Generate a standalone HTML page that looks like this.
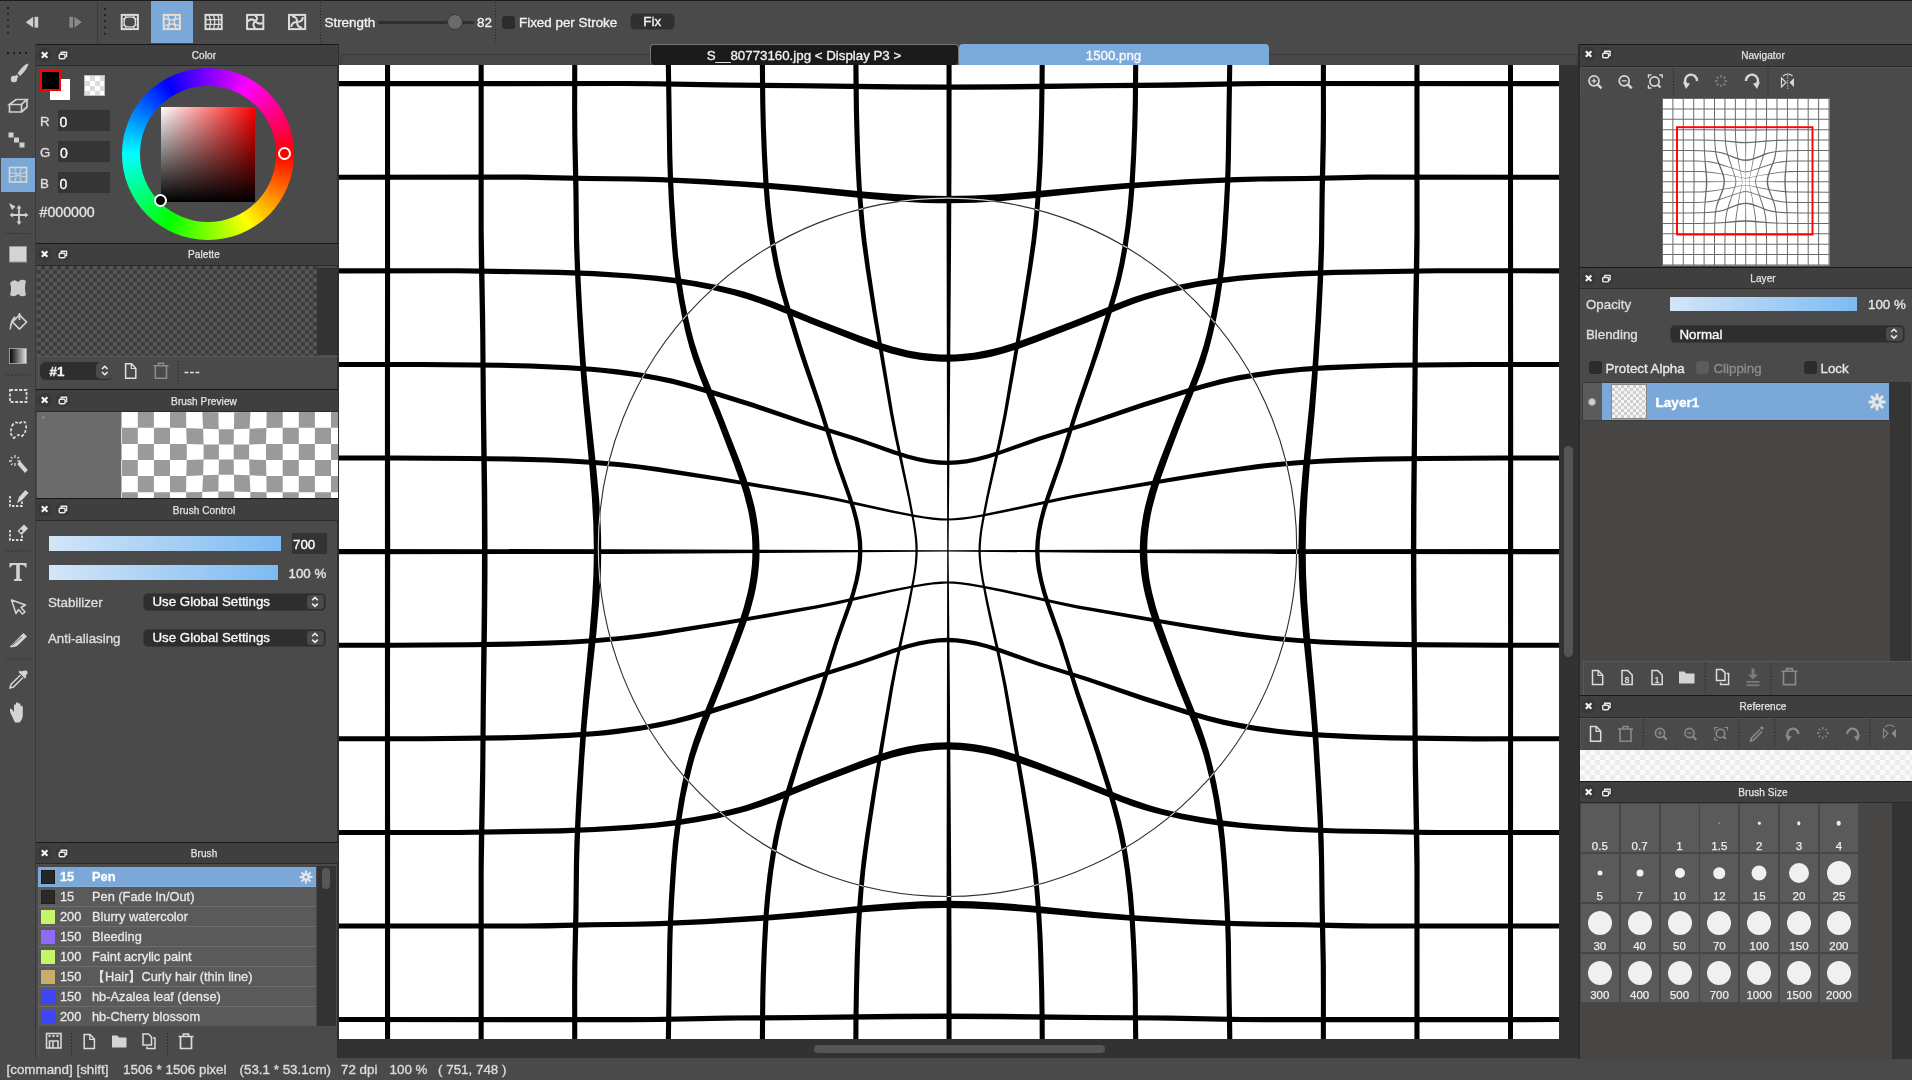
<!DOCTYPE html>
<html><head><meta charset="utf-8">
<style>
*{box-sizing:border-box;margin:0;padding:0}
html,body{width:1912px;height:1080px;overflow:hidden;background:#4a4a4a;font-family:"Liberation Sans",sans-serif;color:#e8e8e8}
.a{position:absolute}
.hd{position:absolute;height:22px;background:#3f3f3f;border-top:1px solid #181818;border-bottom:1px solid #2a2a2a}
.hd .t{position:absolute;left:0;right:0;top:4.5px;text-align:center;font-size:10px;color:#e4e4e4;letter-spacing:0.1px;-webkit-text-stroke:0.25px currentColor}
.hd svg{position:absolute;top:4px}
.txt{position:absolute;white-space:nowrap;font-size:13.3px;line-height:16px;color:#e8e8e8;-webkit-text-stroke:0.35px currentColor;transform:translateY(1px)}
.dots{position:absolute;width:2px;background-image:linear-gradient(#222 50%,transparent 50%);background-size:2px 4px}
.hdots{position:absolute;height:2px;background-image:linear-gradient(90deg,#222 50%,transparent 50%);background-size:4px 2px}
.ic{position:absolute}
.dd{position:absolute;background:#2e2e2e;border-radius:5px;border:1px solid #3a3a3a}
.dd .st{position:absolute;right:1px;top:1px;bottom:1px;width:17px;background:#4a4a4a;border-radius:4px}
.sl{position:absolute;height:14px;background:linear-gradient(90deg,#d3e6f8,#7cbaf2)}
.row{position:absolute;left:38px;width:278px;height:20px;background:#5a5a5a;border-bottom:1px solid #6c6c6c;font-size:12.8px;line-height:20px;-webkit-text-stroke:0.3px currentColor}
.row .sw{position:absolute;left:3px;top:3px;width:14px;height:14px}
.row .n{position:absolute;left:22px;top:0}
.row .m{position:absolute;left:54px;top:0;white-space:nowrap}
.bs{position:absolute;width:38px;height:48px;background:#5a5a5a}
.bs .c{position:absolute;left:50%;top:19px;border-radius:50%;background:#f0f0f0;transform:translate(-50%,-50%)}
.bs .l{position:absolute;left:0;right:0;top:35.5px;text-align:center;font-size:11.5px;color:#eee;-webkit-text-stroke:0.25px currentColor}
</style></head><body>
<!-- ===== TOP TOOLBAR ===== -->
<div class="a" style="left:0;top:0;width:1912px;height:1px;background:#1d1d1d"></div>
<div class="dots" style="left:7px;top:7px;height:28px;background-size:2px 6.2px;background-image:linear-gradient(#1f1f1f 35%,transparent 35%)"></div>
<svg class="a" style="left:20px;top:12px" width="70" height="20" viewBox="20 12 70 20">
<path d="M33.2 16.8 L25.8 22.2 L33.2 27.6Z" fill="#cfcfcf"/><rect x="34.6" y="16.8" width="3.6" height="10.8" fill="#cfcfcf"/>
<rect x="69.4" y="16.8" width="3.6" height="10.8" fill="#8a8a8a"/><path d="M74.4 16.8 L81.8 22.2 L74.4 27.6Z" fill="#8a8a8a"/>
</svg>
<div class="a" style="left:97px;top:1px;width:1px;height:43px;background:#3c3c3c"></div>
<div class="dots" style="left:104px;top:8px;height:28px;background-size:2px 6.2px;background-image:linear-gradient(#1f1f1f 35%,transparent 35%)"></div>
<div class="a" style="left:151px;top:1px;width:42px;height:42px;background:#7aa9d9"></div>
<svg class="a" style="left:110px;top:8px" width="205" height="28" viewBox="110 8 205 28">
<g fill="none" stroke="#dcdcdc">
<rect x="121.7" y="14.9" width="16.2" height="14.2" stroke-width="2"/>
<g stroke-width="1.3"><path d="M123 19.2 Q129.8 14.6 136.6 19.2M123 24.8 Q129.8 29.4 136.6 24.8M126.2 16 Q121.8 22 126.2 28M133.4 16 Q137.8 22 133.4 28"/></g>
</g>
<g fill="none" stroke="#e8ddd0">
<rect x="163.7" y="14.9" width="16.2" height="14.2" stroke-width="2"/>
<g stroke-width="1.5"><path d="M164.5 18.2 Q171.8 21.8 179.1 18.2M164.5 25.8 Q171.8 22.2 179.1 25.8M167.6 15.5 Q171 22 167.6 28.5M176 15.5 Q172.6 22 176 28.5"/></g>
</g>
<g fill="none" stroke="#dcdcdc">
<rect x="205.5" y="14.9" width="16.2" height="14.2" stroke-width="2"/>
<g stroke-width="1.3"><path d="M206 19.6h15.2M206 24.4h15.2M209.2 15.5l1 4M213.6 15.5l1 4M218 15.5l1 4M210.4 19.6v4.8M214.6 19.6v4.8M218.8 19.6v4.8M210.4 24.4l-1 4.2M214.6 24.4l-1 4.2M218.8 24.4l-1 4.2"/></g>
</g>
<g fill="none" stroke="#dcdcdc">
<rect x="247.1" y="14.9" width="16.2" height="14.2" stroke-width="2"/>
<g stroke-width="2.1"><path d="M248 21.2 Q251.5 17.5 255.2 21.2 Q258.9 24.9 262.4 22.8M255.2 15.6 Q258.9 18.2 255.2 21.2 Q251.5 24.2 255.2 28.4"/></g>
</g>
<g fill="none" stroke="#dcdcdc">
<rect x="289" y="14.9" width="16.2" height="14.2" stroke-width="2"/>
<g stroke-width="2.1"><path d="M297.1 22 Q297.1 16.5 292 16.2M297.1 22 Q302.6 22 302.9 17M297.1 22 Q297.1 27.5 302.2 27.8M297.1 22 Q291.6 22 291.3 27"/></g>
</g>
</svg>
<div class="dots" style="left:320px;top:2px;height:40px;width:1px;background-size:1px 3px;background-image:linear-gradient(#2a2a2a 50%,transparent 50%)"></div>
<div class="txt" style="left:324.5px;top:14px;font-size:13.4px;color:#f2f2f2">Strength</div>
<div class="a" style="left:378px;top:20.5px;width:96px;height:3px;background:#2f2f2f;border-radius:1.5px"></div>
<div class="a" style="left:446.5px;top:14px;width:16px;height:16px;border-radius:50%;background:#6a6a6a;border:1px solid #3a3a3a"></div>
<div class="txt" style="left:477px;top:14px;font-size:13.4px;color:#f2f2f2">82</div>
<div class="dots" style="left:495px;top:2px;height:40px;width:1px;background-size:1px 3px;background-image:linear-gradient(#2a2a2a 50%,transparent 50%)"></div>
<div class="a" style="left:502px;top:16px;width:13px;height:13px;border-radius:3px;background:#2c2c2c"></div>
<div class="txt" style="left:519px;top:14px;font-size:13.4px;color:#f2f2f2">Fixed per Stroke</div>
<div class="a" style="left:629.5px;top:12.5px;width:45.5px;height:17px;border-radius:5px;background:#2f2f2f;border:1px solid #3d3d3d"></div>
<div class="txt" style="left:629.5px;top:13px;width:45.5px;text-align:center;font-size:13.4px;color:#f2f2f2">Fix</div>

<!-- ===== LEFT TOOL COLUMN ===== -->
<div class="a" style="left:35px;top:44px;width:1px;height:1014px;background:#3a3a3a"></div>
<div class="a" style="left:1px;top:158px;width:34px;height:34px;background:#7aa9d9"></div>
<svg class="a" style="left:0;top:44px" width="36" height="700" viewBox="0 44 36 700">
<g fill="#1e1e1e">
<rect x="7" y="52" width="2" height="2"/><rect x="13" y="52" width="2" height="2"/><rect x="19" y="52" width="2" height="2"/><rect x="25" y="52" width="2" height="2"/>
</g>
<g fill="none" stroke="#262626" stroke-width="1.2" stroke-dasharray="1.2 2.2">
<path d="M5 233.5h26M5 375h26M5 551h26M5 659h26"/>
</g>
<!-- brush -->
<path d="M27.6 63.5 Q22 66 17.5 73.5 L20 76 Q26 71 28.4 64.5Z" fill="#cfcfcf"/>
<circle cx="14" cy="79" r="3.2" fill="#cfcfcf"/><path d="M11 80.5 L16.5 74.5 L18.5 77 L13 82.5Z" fill="#cfcfcf"/>
<!-- eraser -->
<g fill="none" stroke="#d0d0d0" stroke-width="1.7"><path d="M9.5 104.5 L16 99.5 H27 L21.5 104.5Z"/><path d="M9.5 104.5 V112 H21.5 V104.5 M21.5 112 L27 107 V99.5"/></g>
<!-- dots line -->
<g fill="#d0d0d0"><rect x="8.5" y="132.5" width="5" height="5"/><rect x="14" y="137.5" width="5" height="5"/><rect x="19.5" y="142.5" width="5" height="5"/></g>
<!-- mesh (selected) -->
<g fill="none" stroke="#ddd6cc" stroke-width="1.6"><rect x="9.5" y="167.5" width="17" height="14.5"/>
<path d="M9.5 172.5 Q18 175.5 26.5 172.5 M9.5 177 Q18 174 26.5 177 M14.5 167.5 Q18 175 14.5 182 M21.5 167.5 Q18 175 21.5 182" stroke-width="1"/></g>
<!-- move -->
<g fill="#d0d0d0"><path d="M9 203 L15.5 206.5 L12 210Z"/><path d="M19 207 V223 M11.5 215 H26.5" stroke="#d0d0d0" stroke-width="1.8"/>
<path d="M19 205 L16.5 208.5 H21.5Z M19 225 L16.5 221.5 H21.5Z M9.5 215 L13 212.5 V217.5Z M28.5 215 L25 212.5 V217.5Z"/></g>
<!-- fill rect -->
<rect x="9.5" y="246.5" width="17" height="15.5" fill="#d4d4d4" stroke="#9a9a9a" stroke-width="1"/>
<!-- blur -->
<path d="M10 283 Q14 278 18 282 Q22 278 26 281 Q24 288 26 295 Q22 298 18 294 Q14 298 10 295 Q12 288 10 283Z" fill="#cdcdcd"/>
<!-- bucket -->
<g fill="none" stroke="#d0d0d0" stroke-width="1.7"><path d="M12.5 322 L19.5 315 L26.5 322 L19.5 329Z"/><path d="M19.5 313 V320"/></g>
<path d="M15 316 Q10 319 9.5 330 L11 329 Q12 322 15.5 318Z" fill="#d0d0d0"/>
<!-- gradient -->
<defs><linearGradient id="gr1" x1="0" x2="1"><stop offset="0" stop-color="#000"/><stop offset="1" stop-color="#e6e6e6"/></linearGradient></defs>
<rect x="9.5" y="348.5" width="17" height="15" fill="url(#gr1)" stroke="#a0a0a0" stroke-width="1"/>
<!-- select rect -->
<rect x="10" y="390" width="16.5" height="12" fill="none" stroke="#dadada" stroke-width="1.8" stroke-dasharray="3 1.6"/>
<!-- lasso -->
<path d="M12 426 Q15 420 19 424 Q24 419 26 424 Q27 432 22 436 Q19 433 14 438 Q9 435 12 426Z" fill="none" stroke="#dadada" stroke-width="1.8" stroke-dasharray="3 1.8"/>
<!-- wand -->
<g stroke="#d6d6d6" stroke-width="1.3"><path d="M15 455v3M15 463v3M9 461h3M17.5 461h3M11 457l1.5 1.5M11 465l1.5-1.5M19 457l-1.5 1.5"/></g>
<path d="M18 464 L20 462 L27 470 L25 472Z" fill="#d6d6d6" stroke="#d6d6d6" stroke-width="1.2"/>
<!-- select pen -->
<path d="M10 496 V506 H22 V500" fill="none" stroke="#dadada" stroke-width="1.8" stroke-dasharray="2.4 1.6"/>
<path d="M17 503 L19 497 L25.5 490 L28.5 493 L22 500Z" fill="#d6d6d6"/>
<!-- select eraser -->
<path d="M10 530 V540 H22 V534" fill="none" stroke="#dadada" stroke-width="1.8" stroke-dasharray="2.4 1.6"/>
<path d="M17.5 531 L24 524.5 L28 528.5 L21.5 535Z" fill="#d6d6d6"/><circle cx="21" cy="531" r="1.4" fill="#4a4a4a"/>
<!-- T -->
<path d="M9.5 563 H26.5 V567.5 H25.5 Q25 565 22.5 565 H19.8 V578.5 L22 579.5 V581 H14 V579.5 L16.2 578.5 V565 H13.5 Q11 565 10.5 567.5 H9.5Z" fill="#d4d4d4"/>
<!-- arrow -->
<path d="M11.5 600 L25.5 605 L21 607.5 L25 612 L22.5 614 L18.5 609.5 L16 613.5Z" fill="none" stroke="#d4d4d4" stroke-width="1.5" stroke-linejoin="round"/>
<!-- knife -->
<path d="M9.5 647 L23.5 633 L27 636.5 L17 646 Q13 648 9.5 647Z" fill="#d4d4d4"/><path d="M12 645.5 L22 637" stroke="#4a4a4a" stroke-width="0.8"/>
<!-- eyedropper -->
<path d="M24.5 670.5 Q28 670 27.5 673.5 L25.5 676 L26.5 677 L25 678.5 L18.5 672 L20 670.5 L21 671.5Z" fill="#d4d4d4"/>
<path d="M20.5 675 L11 684.5 L10 688 L13.5 687 L23 677.5" fill="none" stroke="#d4d4d4" stroke-width="1.5"/>
<!-- hand -->
<path d="M12.5 717 Q9.5 712 10 709 Q11 708 12.5 710 L14 712 V705 Q15 703.5 16 705 V711 V703 Q17 701.5 18.3 703 V711 V704 Q19.3 702.5 20.5 704 V711.5 V706.5 Q21.5 705 22.8 706.5 V715 Q22.5 720 19.5 722.5 H15 Q13.5 720 12.5 717Z" fill="#d4d4d4"/>
</svg>

<!-- ===== LEFT PANELS ===== -->
<div class="a" style="left:337px;top:44px;width:2px;height:1014px;background:#2e2e2e"></div>
<!-- Color header -->
<div class="hd" style="left:36px;top:43.5px;width:302px;height:22.5px"><div class="t" style="left:34px;top:5px">Color</div>
<svg style="left:0;top:0" width="40" height="21" viewBox="36 44 40 21"><circle cx="44.6" cy="54" r="7" fill="#383838"/><circle cx="63" cy="54" r="7" fill="#383838"/><path d="M41.8 51.2l5.6 5.6M47.4 51.2l-5.6 5.6" stroke="#f4f4f4" stroke-width="2.1"/><g fill="none" stroke="#e8e8e8" stroke-width="1.4"><rect x="59.2" y="53.3" width="5.8" height="4.4" rx="1"/><path d="M61.2 53.3v-2.1h5.4v4.4h-1.6"/></g></svg></div>
<!-- color body -->
<div class="a" style="left:49.5px;top:79px;width:20px;height:20.5px;background:#fff"></div>
<div class="a" style="left:40px;top:70px;width:21px;height:21px;background:#000;border:2px solid #f00"></div>
<div class="a" style="left:84px;top:74.5px;width:21px;height:21px;background-color:#fff;background-image:linear-gradient(45deg,#dcdcdc 25%,transparent 25%,transparent 75%,#dcdcdc 75%),linear-gradient(45deg,#dcdcdc 25%,transparent 25%,transparent 75%,#dcdcdc 75%);background-size:10px 10px;background-position:0 0,5px 5px;border:1px solid #bbb"></div>
<div class="txt" style="left:40px;top:113px;font-size:13.3px;color:#dedede">R</div>
<div class="txt" style="left:40px;top:144px;font-size:13.3px;color:#dedede">G</div>
<div class="txt" style="left:40px;top:175px;font-size:13.3px;color:#dedede">B</div>
<div class="a" style="left:57.5px;top:110px;width:52px;height:21px;background:#353535"></div>
<div class="a" style="left:58px;top:141px;width:52px;height:21px;background:#353535"></div>
<div class="a" style="left:57.5px;top:172px;width:52px;height:21px;background:#353535"></div>
<div class="txt" style="left:59.5px;top:113px;font-size:14px;color:#fff">0</div>
<div class="txt" style="left:60px;top:144px;font-size:14px;color:#fff">0</div>
<div class="txt" style="left:59.5px;top:175px;font-size:14px;color:#fff">0</div>
<div class="txt" style="left:39.5px;top:203px;font-size:14.2px;color:#e4e4e4">#000000</div>
<div class="a" style="left:122px;top:68px;width:171.5px;height:171.5px;border-radius:50%;background:conic-gradient(from 90deg,#ff0000,#ffff00 16.67%,#00ff00 33.33%,#00ffff 50%,#0000ff 66.67%,#ff00ff 83.33%,#ff0000)"></div>
<div class="a" style="left:140px;top:86px;width:135.5px;height:135.5px;border-radius:50%;background:#4a4a4a"></div>
<div class="a" style="left:160.8px;top:106.7px;width:94.5px;height:95px;background:linear-gradient(to top,#000,rgba(0,0,0,0)),linear-gradient(to right,#fff,#f00)"></div>
<div class="a" style="left:277.7px;top:147.2px;width:13px;height:13px;border-radius:50%;background:#f00;border:2.2px solid #fff"></div>
<div class="a" style="left:154.3px;top:193.8px;width:13px;height:13px;border-radius:50%;background:#000;border:2.2px solid #fff"></div>
<!-- Palette header -->
<div class="hd" style="left:36px;top:242.5px;width:302px;height:23px"><div class="t" style="left:34px;top:5.5px">Palette</div>
<svg style="left:0;top:0" width="40" height="21" viewBox="36 243.5 40 21"><circle cx="44.6" cy="253.5" r="7" fill="#383838"/><circle cx="63" cy="253.5" r="7" fill="#383838"/><path d="M41.8 250.7l5.6 5.6M47.4 250.7l-5.6 5.6" stroke="#f4f4f4" stroke-width="2.1"/><g fill="none" stroke="#e8e8e8" stroke-width="1.4"><rect x="59.2" y="252.8" width="5.8" height="4.4" rx="1"/><path d="M61.2 252.8v-2.1h5.4v4.4h-1.6"/></g></svg></div>
<div class="a" style="left:37px;top:266px;width:279.5px;height:90px;background-color:#565656;background-image:linear-gradient(45deg,#3c3c3c 25%,transparent 25%,transparent 75%,#3c3c3c 75%),linear-gradient(45deg,#3c3c3c 25%,transparent 25%,transparent 75%,#3c3c3c 75%);background-size:8px 8px;background-position:0 0,4px 4px"></div>
<div class="a" style="left:316.5px;top:267.5px;width:20px;height:87.5px;background:#333"></div>
<div class="a" style="left:37.5px;top:356px;width:300px;height:33px;border-top:1px solid #585858;border-left:1px solid #585858"></div>
<div class="a" style="left:40px;top:361.5px;width:74px;height:18px;border-radius:6px;background:#2e2e2e"></div>
<div class="a" style="left:96px;top:362px;width:17.5px;height:17px;border-radius:5px;background:#4a4a4a"></div>
<svg class="a" style="left:96px;top:362px" width="18" height="17" viewBox="0 0 18 17"><path d="M6 7 L8.8 4.2 L11.6 7 M6 10 L8.8 12.8 L11.6 10" fill="none" stroke="#eee" stroke-width="1.5"/></svg>
<div class="txt" style="left:49.5px;top:362.5px;font-size:13.3px;font-weight:bold;color:#f4f4f4">#1</div>
<svg class="a" style="left:120px;top:360px" width="90" height="22" viewBox="120 360 90 22"><path d="M125.6 363.8 H131.5 L135.8 368.2 V378.3 H125.6Z" fill="none" stroke="#e0e0e0" stroke-width="1.5"/><path d="M131.3 363.8 V368.5 H135.8" fill="none" stroke="#e0e0e0" stroke-width="1.2"/>
<g fill="none" stroke="#8a8a8a" stroke-width="1.6"><path d="M153.5 365.8 H168.5 M155.3 366 V378.3 H166.5 V366 M158.5 365.8 V363.3 H163.5 V365.8"/></g>
<path d="M178 361v26" stroke="#262626" stroke-width="1" stroke-dasharray="1.2 2"/>
<path d="M184.5 372.5 h3.8 M190 372.5 h3.8 M195.5 372.5 h3.8" stroke="#e0e0e0" stroke-width="1.5"/></svg>
<!-- Brush Preview header -->
<div class="hd" style="left:36px;top:389px;width:302px;height:23px"><div class="t" style="left:34px;top:5.5px">Brush Preview</div>
<svg style="left:0;top:0" width="40" height="21" viewBox="36 390 40 21"><circle cx="44.6" cy="400" r="7" fill="#383838"/><circle cx="63" cy="400" r="7" fill="#383838"/><path d="M41.8 397.2l5.6 5.6M47.4 397.2l-5.6 5.6" stroke="#f4f4f4" stroke-width="2.1"/><g fill="none" stroke="#e8e8e8" stroke-width="1.4"><rect x="59.2" y="399.3" width="5.8" height="4.4" rx="1"/><path d="M61.2 399.3v-2.1h5.4v4.4h-1.6"/></g></svg></div>
<div class="a" style="left:37px;top:412px;width:84px;height:86px;background:#6b6b6b"></div>
<div class="a" style="left:41.5px;top:415.5px;width:3.5px;height:3.5px;border-radius:50%;background:#888"></div>
<svg class="a" style="left:121px;top:412px" width="217" height="86" viewBox="121 412 217 86"><rect x="121" y="412" width="217" height="86" fill="#fff"/><path d="M121.7,395.6 137.8,395.6 137.8,411.7 121.7,411.7 121.7,397.6ZM153.9,395.6 170.0,395.6 170.0,411.7 153.9,411.7 153.9,397.6ZM186.1,395.6 202.2,395.6 202.3,411.9 186.1,411.7 186.1,397.6ZM218.3,395.6 234.4,395.6 234.3,412.3 218.4,412.3 218.3,397.7ZM250.5,395.6 266.6,395.6 266.6,397.6 266.6,411.7 250.4,411.9 250.5,397.6ZM282.7,395.6 298.8,395.6 298.8,411.7 282.7,411.7 282.7,397.6ZM314.9,395.6 331.0,395.6 331.0,411.7 314.9,411.7 314.9,397.6ZM347.1,395.6 363.2,395.6 363.2,411.7 347.1,411.7 347.1,397.6ZM105.6,411.7 121.7,411.7 121.7,427.8 105.6,427.8 105.6,413.7ZM137.8,411.7 153.9,411.7 153.9,427.8 137.8,427.8 137.8,413.7ZM170.0,411.7 186.1,411.7 186.3,427.9 170.0,427.8 170.0,413.7ZM202.3,411.9 218.4,412.3 218.7,429.2 203.1,428.7 202.4,414.0ZM234.3,412.3 250.4,411.9 250.3,414.0 249.6,428.7 245.6,428.8 233.9,429.2 234.2,414.5ZM266.6,411.7 282.7,411.7 282.7,427.8 266.4,427.9 266.6,413.7ZM298.8,411.7 314.9,411.7 314.9,427.8 298.8,427.8 298.8,413.7ZM331.0,411.7 347.1,411.7 347.1,427.8 331.0,427.8 331.0,413.7ZM121.7,427.8 137.8,427.8 137.8,443.9 121.7,443.9 121.7,429.8ZM153.9,427.8 170.0,427.8 170.0,443.9 153.9,443.9 153.9,429.8ZM186.3,427.9 203.1,428.7 203.6,444.4 186.7,444.0 186.3,429.9ZM218.7,429.2 233.9,429.2 233.7,444.5 218.9,444.5 218.8,431.2ZM249.6,428.7 266.4,427.9 266.0,444.0 249.1,444.4 249.5,430.7ZM282.7,427.8 298.8,427.8 298.8,443.9 282.7,443.9 282.7,429.8ZM314.9,427.8 331.0,427.8 331.0,443.9 314.9,443.9 314.9,429.8ZM347.1,427.8 363.2,427.8 363.2,443.9 347.1,443.9 347.1,429.8ZM105.6,443.9 121.7,443.9 121.7,460.0 105.6,460.0 105.6,445.9ZM137.8,443.9 153.9,443.9 153.9,460.0 137.8,460.0 137.8,445.9ZM170.0,443.9 186.7,444.0 186.8,452.0 186.7,459.9 170.0,460.0 170.0,445.9ZM203.6,444.4 218.9,444.5 218.9,459.4 203.6,459.5 203.6,446.3ZM233.7,444.5 249.1,444.4 249.1,459.6 233.7,459.4 233.7,446.4ZM266.0,444.0 282.7,443.9 282.7,460.0 266.0,459.9 266.0,446.0ZM298.8,443.9 314.9,443.9 314.9,460.0 298.8,460.0 298.8,445.9ZM331.0,443.9 347.1,443.9 347.1,460.0 331.0,460.0 331.0,445.9ZM121.7,460.0 137.8,460.0 137.8,476.1 121.7,476.1 121.7,462.0ZM153.9,460.0 170.0,460.0 170.0,476.1 153.9,476.1 153.9,462.0ZM186.7,459.9 203.6,459.5 203.5,461.5 203.1,475.2 188.4,475.9 186.3,476.0 186.7,461.9ZM218.9,459.4 233.7,459.4 233.9,474.7 218.7,474.7 218.9,461.2ZM249.1,459.6 266.0,459.9 266.3,471.9 266.4,476.0 249.6,475.2 249.2,461.5ZM282.7,460.0 298.8,460.0 298.8,476.1 282.7,476.1 282.7,462.0ZM314.9,460.0 331.0,460.0 331.0,476.1 314.9,476.1 314.9,462.0ZM347.1,460.0 363.2,460.0 363.2,476.1 347.1,476.1 347.1,462.0ZM105.6,476.1 121.7,476.1 121.7,492.2 105.6,492.2 105.6,478.1ZM137.8,476.1 153.9,476.1 153.9,492.2 137.8,492.2 137.8,478.1ZM170.0,476.1 186.3,476.0 186.1,492.2 170.0,492.2 170.0,478.1ZM203.1,475.2 218.7,474.7 218.4,491.6 202.3,492.0 203.0,477.3ZM233.9,474.7 249.6,475.2 250.4,492.0 234.3,491.6 234.0,476.8ZM266.4,476.0 282.7,476.1 282.7,492.2 266.6,492.2 266.4,478.0ZM298.8,476.1 314.9,476.1 314.9,492.2 298.8,492.2 298.8,478.1ZM331.0,476.1 347.1,476.1 347.1,492.2 331.0,492.2 331.0,478.1ZM121.7,492.2 137.8,492.2 137.8,508.3 121.7,508.3 121.7,494.2ZM153.9,492.2 170.0,492.2 170.0,502.3 170.0,508.3 153.9,508.3 153.9,494.2ZM186.1,492.2 202.3,492.0 202.2,508.3 186.1,508.3 186.1,494.2ZM218.4,491.6 234.3,491.6 234.4,508.3 218.3,508.3 218.4,493.8ZM250.4,492.0 266.6,492.2 266.6,508.3 250.5,508.3 250.4,494.1ZM282.7,492.2 298.8,492.2 298.8,508.3 282.7,508.3 282.7,494.2ZM314.9,492.2 331.0,492.2 331.0,508.3 314.9,508.3 314.9,494.2ZM347.1,492.2 363.2,492.2 363.2,508.3 347.1,508.3 347.1,494.2ZM105.6,508.3 121.7,508.3 121.7,524.4 105.6,524.4 105.6,510.3ZM137.8,508.3 153.9,508.3 153.9,524.4 137.8,524.4 137.8,510.3ZM170.0,508.3 186.1,508.3 186.1,516.4 186.1,524.4 170.0,524.4 170.0,510.3ZM202.2,508.3 218.3,508.3 218.3,524.4 202.2,524.4 202.2,510.3ZM234.4,508.3 250.5,508.3 250.5,514.3 250.5,524.4 234.4,524.4 234.4,510.3ZM266.6,508.3 282.7,508.3 282.7,524.4 266.6,524.4 266.6,510.3ZM298.8,508.3 314.9,508.3 314.9,524.4 298.8,524.4 298.8,510.3ZM331.0,508.3 347.1,508.3 347.1,524.4 331.0,524.4 331.0,510.3Z" fill="#9a9a9a"/></svg>
<!-- Brush Control header -->
<div class="hd" style="left:36px;top:498px;width:302px;height:22.5px"><div class="t" style="left:34px;top:5.5px">Brush Control</div>
<svg style="left:0;top:0" width="40" height="21" viewBox="36 499 40 21"><circle cx="44.6" cy="509" r="7" fill="#383838"/><circle cx="63" cy="509" r="7" fill="#383838"/><path d="M41.8 506.2l5.6 5.6M47.4 506.2l-5.6 5.6" stroke="#f4f4f4" stroke-width="2.1"/><g fill="none" stroke="#e8e8e8" stroke-width="1.4"><rect x="59.2" y="508.3" width="5.8" height="4.4" rx="1"/><path d="M61.2 508.3v-2.1h5.4v4.4h-1.6"/></g></svg></div>
<div class="sl" style="left:48.5px;top:536px;width:232px;height:14.5px"></div>
<div class="a" style="left:291.5px;top:533px;width:35px;height:21px;background:#333"></div>
<div class="txt" style="left:293px;top:536px;font-size:13.3px;color:#fff">700</div>
<div class="sl" style="left:48.5px;top:565px;width:229.5px;height:14.5px"></div>
<div class="txt" style="left:288.5px;top:564.5px;font-size:13.3px;color:#e6e6e6">100 %</div>
<div class="txt" style="left:48px;top:594px;font-size:13.3px;color:#dedede">Stabilizer</div>
<div class="dd" style="left:142.5px;top:592.5px;width:183px;height:18.5px"><div class="st"></div></div>
<svg class="a" style="left:307px;top:593px" width="18" height="18" viewBox="0 0 18 18"><path d="M5.2 7.2 L8 4.4 L10.8 7.2 M5.2 10.6 L8 13.4 L10.8 10.6" fill="none" stroke="#eee" stroke-width="1.5"/></svg>
<div class="txt" style="left:152.5px;top:593px;font-size:13.3px;color:#fafafa">Use Global Settings</div>
<div class="txt" style="left:48px;top:630px;font-size:13.3px;color:#dedede">Anti-aliasing</div>
<div class="dd" style="left:142.5px;top:628.5px;width:183px;height:18.5px"><div class="st"></div></div>
<svg class="a" style="left:307px;top:629px" width="18" height="18" viewBox="0 0 18 18"><path d="M5.2 7.2 L8 4.4 L10.8 7.2 M5.2 10.6 L8 13.4 L10.8 10.6" fill="none" stroke="#eee" stroke-width="1.5"/></svg>
<div class="txt" style="left:152.5px;top:629px;font-size:13.3px;color:#fafafa">Use Global Settings</div>
<!-- Brush header -->
<div class="hd" style="left:36px;top:841.5px;width:302px;height:22px"><div class="t" style="left:34px;top:5px">Brush</div>
<svg style="left:0;top:0" width="40" height="21" viewBox="36 842.5 40 21"><circle cx="44.6" cy="852.5" r="7" fill="#383838"/><circle cx="63" cy="852.5" r="7" fill="#383838"/><path d="M41.8 849.7l5.6 5.6M47.4 849.7l-5.6 5.6" stroke="#f4f4f4" stroke-width="2.1"/><g fill="none" stroke="#e8e8e8" stroke-width="1.4"><rect x="59.2" y="851.8" width="5.8" height="4.4" rx="1"/><path d="M61.2 851.8v-2.1h5.4v4.4h-1.6"/></g></svg></div>
<div class="a" style="left:37px;top:864px;width:300px;height:163px;background:#4a4a4a"></div>
<div class="row" style="top:867px;background:#7aa8d8;border-bottom:1px solid #86b2de;font-weight:bold;color:#fff"><div class="sw" style="background:#262626;border:1px solid #1a1a1a"></div><div class="n">15</div><div class="m">Pen</div>
<svg style="position:absolute;left:261px;top:3px" width="14" height="14" viewBox="-7 -7 14 14"><g fill="#e8e8e8"><circle r="3.8"/><path d="M-1 -6.5h2v13h-2zM-6.5 -1h13v2h-13z"/><path d="M-1 -6.5h2v13h-2zM-6.5 -1h13v2h-13z" transform="rotate(45)"/></g><circle r="1.6" fill="#7aa8d8"/></svg></div>
<div class="row" style="top:887px"><div class="sw" style="background:#2a2a2a;border:1px solid #222"></div><div class="n">15</div><div class="m">Pen (Fade In/Out)</div></div>
<div class="row" style="top:907px"><div class="sw" style="background:#c4f56a"></div><div class="n">200</div><div class="m">Blurry watercolor</div></div>
<div class="row" style="top:927px"><div class="sw" style="background:#8f6af5"></div><div class="n">150</div><div class="m">Bleeding</div></div>
<div class="row" style="top:947px"><div class="sw" style="background:#c4f56a"></div><div class="n">100</div><div class="m">Faint acrylic paint</div></div>
<div class="row" style="top:967px"><div class="sw" style="background:#c9ad6d"></div><div class="n">150</div><div class="m">【Hair】Curly hair (thin line)</div></div>
<div class="row" style="top:987px"><div class="sw" style="background:#3f44f5"></div><div class="n">150</div><div class="m">hb-Azalea leaf (dense)</div></div>
<div class="row" style="top:1007px;height:19px;border-bottom:none"><div class="sw" style="background:#3f44f5"></div><div class="n">200</div><div class="m">hb-Cherry blossom</div></div>
<div class="a" style="left:317px;top:866px;width:18.5px;height:160px;background:#333"></div>
<div class="a" style="left:321.5px;top:868px;width:8px;height:21px;border-radius:4px;background:#575757"></div>
<div class="a" style="left:38px;top:1026px;width:299px;height:31px;border-left:1px solid #5a5a5a"></div>
<svg class="a" style="left:38px;top:1026px" width="170" height="31" viewBox="38 1026 170 31">
<g fill="none" stroke="#d8d8d8" stroke-width="1.6"><rect x="46.5" y="1033.5" width="14.5" height="14.5"/><path d="M49.5 1048 V1041 H58 V1048 M53 1041.5 V1048"/></g>
<g fill="#d8d8d8"><rect x="48.5" y="1035" width="2" height="2"/><rect x="52.5" y="1035" width="2" height="2"/><rect x="56.5" y="1035" width="2" height="2"/></g>
<path d="M71.5 1033v22" stroke="#262626" stroke-width="1" stroke-dasharray="1.2 2"/>
<path d="M84.2 1034.5 H90 L94.4 1039 V1048.5 H84.2Z" fill="none" stroke="#dcdcdc" stroke-width="1.5"/><path d="M89.8 1034.5 V1039.3 H94.4" fill="none" stroke="#dcdcdc" stroke-width="1.2"/>
<path d="M112 1035.5 H117.5 L119 1037.5 H126.5 V1047.5 H112Z" fill="#d4d4d4"/>
<g fill="none" stroke="#dcdcdc" stroke-width="1.5"><path d="M143 1034 H148.5 L151.5 1037 V1045 H143Z"/><path d="M153 1038 H155 V1048.5 H147 V1046.5"/></g>
<path d="M167.5 1033v22" stroke="#262626" stroke-width="1" stroke-dasharray="1.2 2"/>
<g fill="none" stroke="#dcdcdc" stroke-width="1.7"><path d="M178.5 1036.5 H193.5 M180.5 1036.8 V1048.5 H191.5 V1036.8 M183.5 1036.5 V1034 H188.5 V1036.5"/></g>
</svg>

<!-- ===== CANVAS ===== -->
<div class="a" style="left:339px;top:44px;width:1240px;height:1014px;background:#4a4a4a"></div>
<div class="a" style="left:1559px;top:65px;width:20px;height:993px;background:#323232"></div>
<div class="a" style="left:339px;top:1039px;width:1240px;height:19px;background:#323232"></div>
<div class="a" style="left:1564px;top:446px;width:9px;height:211px;border-radius:4.5px;background:#555"></div>
<div class="a" style="left:814px;top:1045px;width:291px;height:8px;border-radius:4px;background:#555"></div>
<svg class="a" style="left:339px;top:65px" width="1220" height="974" viewBox="339 65 1220 974"><rect x="339" y="65" width="1220" height="974" fill="#fff"/><path d="M385.0,57.0 385.0,294.0 384.9,411.0 385.0,1047.0 390.1,1047.0 390.1,817.5 390.0,708.1 390.2,544.5 390.0,391.4 390.1,283.5 390.1,57.0ZM478.6,57.0 478.6,235.5 478.8,259.6 480.2,333.7 480.8,411.6 481.8,499.8 482.0,550.5 481.8,601.2 480.8,690.9 480.2,767.3 478.8,841.4 478.6,865.5 478.6,1047.0 483.7,1047.0 483.7,870.0 485.2,780.7 485.9,704.3 487.1,620.5 487.5,575.8 487.5,534.1 487.2,490.9 485.9,399.7 485.2,318.7 483.7,229.5 483.7,57.0ZM572.2,57.0 572.1,110.9 572.3,139.6 573.4,193.1 574.0,244.5 575.4,282.8 577.3,319.7 579.6,356.4 581.2,379.2 583.4,405.0 589.3,466.0 591.8,496.5 593.3,523.6 593.8,547.7 593.7,560.4 593.4,574.6 592.0,601.7 589.6,632.0 583.3,697.5 580.7,729.4 576.5,795.1 575.3,819.7 574.4,842.7 573.9,862.6 573.4,907.9 572.2,966.0 572.1,991.6 572.2,1047.0 577.3,1047.0 577.2,993.1 577.4,964.4 578.5,913.8 579.1,862.5 579.8,841.0 580.8,818.0 584.1,761.0 586.7,725.9 589.0,701.6 596.4,633.0 599.1,602.7 600.7,575.8 601.1,563.1 601.2,550.5 601.1,537.9 600.7,525.2 599.1,498.3 596.3,468.0 589.0,399.4 586.7,375.1 584.1,340.0 582.0,306.1 580.8,283.0 579.8,260.0 579.1,238.5 578.5,187.1 577.4,136.6 577.2,107.9 577.3,57.0ZM665.7,56.9 667.2,158.0 667.9,179.8 668.8,200.3 671.0,235.5 672.9,258.1 675.3,278.1 678.8,300.1 682.1,317.3 685.6,333.0 689.3,347.1 693.3,359.7 700.6,379.6 717.1,420.5 732.2,460.0 738.9,478.3 743.6,493.0 747.5,507.9 748.9,514.6 750.2,522.2 751.1,528.6 751.9,535.9 752.3,543.2 752.4,550.5 752.3,557.8 751.9,565.1 751.1,572.5 750.2,578.9 748.9,586.5 747.5,593.1 743.6,608.1 738.9,622.7 732.3,641.0 717.2,680.5 700.7,721.3 693.4,741.3 689.4,753.9 685.7,768.0 682.1,783.6 678.8,800.9 675.4,822.9 672.9,842.9 671.0,865.5 668.8,900.7 667.9,921.2 667.2,943.0 665.7,1047.1 670.8,1047.1 672.3,946.0 673.0,922.6 674.2,898.8 676.5,863.5 678.5,842.3 681.3,820.4 685.1,798.1 688.4,782.4 691.8,768.2 694.7,757.5 698.9,744.7 706.4,724.4 721.2,687.9 739.7,640.6 745.9,623.7 750.3,610.4 754.3,595.6 755.9,587.9 757.2,580.4 758.2,573.1 758.9,565.9 759.4,558.7 759.5,551.5 759.4,543.4 759.0,536.2 758.3,529.0 757.3,521.7 756.1,514.2 754.5,506.6 752.8,499.9 750.6,491.8 745.9,477.3 740.2,461.7 721.1,413.1 705.6,374.8 701.4,363.7 698.2,354.5 694.1,341.7 690.8,329.2 687.2,313.4 684.1,297.7 680.6,275.5 678.1,255.4 676.3,234.3 674.0,199.0 673.0,176.8 672.3,155.0 670.8,56.9ZM759.8,58.2 760.2,102.6 760.8,126.2 761.8,153.8 763.6,187.0 765.2,206.1 767.5,226.2 770.3,245.4 773.6,263.5 776.9,278.5 781.2,294.6 786.8,313.5 797.2,346.9 803.4,365.6 818.2,408.3 835.0,461.8 847.2,496.2 851.4,509.2 854.3,520.1 856.4,530.9 857.7,541.2 858.1,550.5 857.7,559.8 856.5,570.1 854.3,581.0 851.4,591.9 847.2,604.9 835.0,639.3 818.2,692.7 803.5,735.4 797.3,754.1 786.8,787.5 781.2,806.3 776.9,822.4 773.6,837.4 770.3,855.6 767.5,874.7 765.1,896.7 763.5,915.7 761.8,948.8 760.7,976.4 760.2,998.4 759.8,1045.9 764.9,1045.8 765.3,999.9 765.9,976.2 766.9,948.6 768.8,913.6 770.5,894.3 773.1,872.0 776.1,852.5 779.6,833.9 782.7,820.5 787.2,804.0 792.1,787.4 802.3,753.9 807.8,737.1 821.7,695.8 837.7,644.0 841.9,631.8 851.3,605.7 855.2,593.6 858.5,581.2 860.7,570.4 862.0,560.3 862.4,551.2 862.1,541.4 860.8,531.4 858.7,520.7 855.4,508.3 851.2,495.4 841.9,469.2 837.7,457.0 821.7,405.2 807.7,363.8 801.6,344.9 791.3,311.2 786.4,294.5 782.1,278.1 778.7,262.8 775.4,244.5 772.6,225.2 770.3,204.9 768.7,185.7 766.9,152.4 765.8,124.8 765.3,101.1 764.9,58.3ZM853.3,58.9 853.5,83.6 853.9,112.7 854.8,144.6 855.6,165.5 856.7,186.3 858.2,206.3 860.0,225.8 861.9,242.3 865.6,268.7 872.6,313.0 890.0,413.8 894.4,436.1 907.9,497.8 912.4,521.1 913.9,530.3 914.8,537.6 915.3,544.4 915.5,550.5 915.3,556.7 914.8,563.5 913.9,570.8 912.4,580.0 907.7,604.1 894.4,664.9 890.0,687.2 872.6,787.9 865.2,834.9 861.6,861.1 859.8,877.4 858.0,896.7 856.6,916.6 855.5,937.2 854.7,958.1 853.9,991.5 853.4,1018.9 853.3,1045.1 858.4,1045.1 858.5,1018.9 859.0,988.1 859.9,954.5 860.7,933.3 862.0,910.3 863.5,889.8 865.4,869.8 867.5,852.3 870.8,828.0 877.1,786.6 893.2,687.9 897.4,665.4 910.4,602.6 914.8,579.0 916.1,570.5 917.0,563.3 917.5,557.1 917.7,551.0 917.6,545.0 917.1,538.3 916.2,531.2 914.9,522.7 910.4,498.4 897.4,435.6 893.2,413.1 876.6,311.8 870.0,267.4 866.5,240.9 864.7,224.3 863.0,204.8 861.6,184.7 860.5,164.0 859.8,143.1 859.0,111.2 858.4,59.0ZM946.5,59.1 946.6,240.2 947.2,550.6 946.6,860.7 946.5,1044.9 951.6,1044.9 951.5,939.9 951.1,860.7 949.9,695.9 948.6,550.6 949.9,405.1 951.1,240.2 951.5,161.1 951.6,59.1ZM1039.7,58.9 1039.5,83.7 1039.1,112.8 1038.2,144.7 1037.5,165.6 1036.3,186.4 1035.0,204.5 1033.3,223.8 1031.5,240.2 1027.9,266.5 1021.0,311.0 1003.9,412.5 999.2,436.5 986.0,498.0 981.5,521.9 980.0,531.0 979.2,538.2 978.6,545.0 978.5,551.1 978.7,557.1 979.3,564.0 980.2,571.3 981.7,580.5 986.2,603.9 999.2,664.5 1003.6,686.9 1020.2,785.0 1026.6,826.2 1030.1,850.5 1032.3,868.0 1034.3,888.1 1035.9,908.6 1037.3,931.7 1038.1,952.9 1039.1,988.2 1039.6,1018.9 1039.7,1045.1 1044.8,1045.1 1044.7,1019.0 1044.2,990.0 1043.3,956.5 1042.5,935.6 1041.3,915.0 1039.8,895.0 1038.0,875.7 1036.1,859.3 1032.3,833.1 1025.1,788.8 1006.8,686.3 1002.2,664.1 988.8,604.5 984.0,580.9 982.5,571.5 981.5,564.2 980.9,557.2 980.7,550.5 980.9,543.9 981.5,536.9 982.5,529.5 984.1,520.2 988.8,496.5 1002.3,436.9 1006.8,414.7 1025.1,312.1 1032.3,267.8 1036.1,241.6 1038.0,225.3 1039.8,206.0 1041.3,186.0 1042.5,165.4 1043.3,144.5 1044.1,112.7 1044.6,83.6 1044.8,58.9ZM1133.2,58.2 1132.8,102.6 1132.2,126.3 1131.2,153.9 1129.3,187.1 1127.7,206.3 1125.4,226.5 1122.6,245.8 1119.3,264.0 1115.9,279.2 1111.5,295.4 1106.6,312.0 1096.2,345.5 1090.1,364.4 1075.4,407.3 1058.9,459.8 1045.9,496.6 1041.8,509.5 1038.8,521.1 1036.7,531.8 1035.5,542.0 1035.1,551.2 1035.6,560.5 1036.8,570.0 1039.0,580.8 1042.0,592.4 1045.9,604.5 1058.9,641.2 1075.3,693.7 1089.3,734.5 1095.5,753.3 1105.9,786.6 1110.8,803.2 1115.2,819.5 1118.3,832.7 1121.9,851.2 1124.9,870.7 1127.7,894.7 1129.3,913.9 1131.2,947.1 1132.3,976.3 1132.8,998.4 1133.2,1045.9 1138.3,1045.9 1137.8,996.9 1137.4,974.9 1136.3,947.4 1134.5,914.3 1133.0,895.3 1130.5,873.4 1127.7,854.3 1124.4,836.3 1121.1,821.4 1116.8,805.5 1111.2,786.7 1101.3,755.6 1094.4,734.9 1079.4,692.3 1074.4,677.0 1062.5,638.9 1050.1,603.7 1046.2,591.6 1043.3,580.6 1041.1,569.6 1039.9,560.0 1039.5,550.5 1039.9,541.1 1041.1,531.4 1043.3,520.5 1045.9,510.4 1050.1,497.4 1062.5,462.1 1074.5,424.0 1079.5,408.7 1093.7,368.1 1100.7,347.5 1111.2,314.2 1116.9,295.5 1121.1,279.5 1124.4,264.7 1127.7,246.6 1130.5,227.6 1132.8,207.5 1134.4,188.4 1136.2,155.3 1137.3,127.7 1137.9,104.1 1138.3,58.2ZM1227.3,56.9 1225.8,156.5 1225.2,178.3 1224.1,200.4 1221.9,235.6 1220.1,256.7 1217.7,276.7 1214.2,298.8 1211.3,314.3 1207.7,330.0 1204.1,344.1 1200.1,356.8 1196.9,365.9 1192.8,376.9 1176.2,418.1 1159.7,460.6 1153.5,477.6 1148.8,492.2 1144.9,507.1 1143.3,514.8 1142.0,522.4 1141.0,529.8 1140.3,537.1 1139.9,544.3 1139.8,551.6 1140.0,558.8 1140.5,566.0 1141.2,573.4 1142.1,579.7 1143.4,587.3 1145.1,595.0 1149.1,610.0 1153.9,624.7 1160.2,641.8 1176.1,682.9 1192.0,722.3 1199.5,742.4 1203.5,755.1 1206.8,767.4 1210.1,781.5 1213.3,797.1 1216.9,819.2 1219.7,841.0 1221.7,863.7 1224.0,899.0 1225.1,921.2 1225.8,944.5 1227.3,1047.1 1232.4,1047.1 1232.2,1025.9 1231.4,984.1 1230.9,941.6 1230.3,921.4 1229.4,900.9 1227.1,864.1 1225.2,841.6 1223.2,823.4 1219.5,799.8 1216.3,782.7 1212.9,767.2 1208.9,751.5 1205.0,739.0 1201.9,730.0 1197.9,719.3 1180.3,675.6 1168.2,643.5 1161.1,623.6 1156.0,607.6 1152.1,592.5 1150.7,585.8 1149.3,578.2 1148.5,571.7 1147.7,564.2 1147.4,557.9 1147.2,550.5 1147.4,543.2 1147.7,536.8 1148.5,529.4 1149.4,522.9 1150.5,516.3 1152.1,508.5 1156.1,493.4 1161.1,477.4 1168.3,457.5 1180.4,425.4 1197.9,381.7 1202.0,370.9 1205.1,361.9 1208.9,349.5 1212.9,333.8 1216.4,318.3 1219.3,302.9 1222.9,279.2 1225.1,261.0 1227.0,238.5 1229.2,203.3 1230.3,181.2 1230.9,159.4 1232.4,56.9ZM1320.8,57.0 1320.9,109.4 1320.7,138.1 1319.6,190.1 1319.0,241.5 1317.5,282.9 1315.6,318.3 1313.3,355.0 1311.6,377.8 1309.4,403.6 1302.9,467.7 1300.5,496.6 1299.6,510.9 1298.9,525.1 1298.4,550.5 1298.9,575.9 1299.6,590.1 1300.5,604.4 1303.0,634.8 1309.3,697.4 1311.6,723.2 1313.3,746.0 1315.6,782.7 1317.6,819.7 1319.0,859.5 1319.6,910.9 1320.7,962.9 1320.9,991.6 1320.8,1047.0 1325.9,1047.0 1325.9,964.5 1324.7,904.9 1324.2,864.1 1323.8,844.4 1323.0,819.9 1321.8,795.3 1317.8,728.1 1315.2,694.8 1309.4,630.8 1307.3,601.9 1306.0,573.2 1305.7,546.2 1306.2,522.1 1307.6,494.8 1309.7,467.2 1315.0,409.2 1317.2,380.5 1321.1,319.5 1323.0,281.1 1324.1,247.5 1324.7,196.1 1325.9,141.0 1326.0,113.9 1325.9,57.0ZM1414.4,57.0 1414.4,234.0 1412.8,330.7 1412.2,407.2 1411.1,499.9 1410.9,550.5 1411.1,602.6 1412.2,693.8 1412.8,771.8 1414.4,867.0 1414.4,1047.0 1419.5,1047.0 1419.6,862.6 1419.3,836.9 1417.9,758.3 1416.5,599.7 1416.3,550.5 1416.5,501.3 1417.9,342.7 1419.3,264.1 1419.6,240.0 1419.5,57.0ZM1508.0,57.0 1508.0,291.0 1508.1,403.5 1508.0,543.0 1508.1,699.0 1508.0,810.0 1508.0,1047.0 1513.0,1047.0 1513.2,424.5 1513.1,301.5 1513.0,57.0Z" fill="#000"/><path d="M331.0,81.1 629.4,81.0 656.6,81.2 733.7,82.6 810.1,83.2 896.8,84.2 947.5,84.4 998.2,84.2 1084.9,83.2 1161.3,82.6 1238.4,81.2 1265.6,81.0 1567.0,81.1 1567.0,86.2 1271.6,86.1 1245.9,86.3 1176.3,87.7 1101.3,88.3 1014.5,89.5 968.3,89.8 928.2,89.8 886.4,89.5 798.2,88.3 717.2,87.6 649.1,86.3 621.9,86.1 331.0,86.2ZM331.0,174.7 525.9,174.6 545.7,174.9 591.7,175.9 636.9,176.4 659.8,177.0 682.8,177.9 705.9,179.1 770.1,183.1 800.4,185.6 865.9,191.8 894.9,194.1 922.0,195.5 947.5,195.9 973.0,195.5 998.7,194.2 1029.1,191.8 1093.1,185.7 1123.4,183.2 1189.1,179.1 1212.2,177.9 1235.2,177.0 1258.1,176.4 1303.4,175.9 1349.3,174.9 1369.1,174.6 1567.0,174.7 1567.0,179.8 1369.0,179.7 1309.3,180.9 1259.5,181.6 1218.1,183.0 1193.4,184.3 1161.2,186.3 1123.0,189.0 1097.1,191.4 1030.1,198.5 999.8,201.2 974.2,202.7 950.3,203.3 937.7,203.2 925.0,202.9 912.3,202.3 898.1,201.4 867.8,198.8 796.4,191.3 767.4,188.7 744.6,187.0 704.7,184.5 681.5,183.3 660.0,182.3 632.5,181.5 585.7,180.9 522.9,179.7 331.0,179.8ZM331.0,268.3 458.4,268.2 559.6,269.8 594.1,271.1 630.9,273.4 655.1,275.4 675.0,277.7 697.0,281.2 715.9,284.8 735.1,289.3 743.9,291.6 751.0,293.8 761.9,297.4 774.5,302.1 818.8,319.9 859.4,335.4 877.6,341.9 893.3,346.7 901.4,348.8 908.1,350.4 921.2,352.7 933.9,354.1 940.2,354.5 947.5,354.6 954.8,354.5 961.0,354.1 973.8,352.7 986.8,350.3 993.6,348.8 1001.6,346.7 1017.4,341.8 1035.5,335.3 1076.2,319.8 1120.5,302.0 1133.2,297.3 1144.0,293.7 1159.9,289.2 1179.1,284.8 1198.0,281.1 1220.0,277.7 1241.6,275.2 1265.8,273.3 1300.9,271.1 1335.4,269.7 1436.6,268.2 1567.0,268.3 1567.0,273.4 1438.1,273.3 1335.3,274.9 1300.6,276.4 1260.6,278.9 1237.7,281.0 1215.8,284.0 1197.0,287.1 1177.8,291.0 1160.1,295.4 1145.7,299.7 1134.6,303.6 1123.6,307.7 1083.6,323.9 1035.2,342.8 1019.7,348.4 1005.2,353.1 997.1,355.3 990.4,356.9 983.9,358.3 976.4,359.5 962.8,361.1 955.6,361.6 948.5,361.8 941.3,361.7 934.2,361.3 926.9,360.7 919.6,359.7 912.1,358.5 905.6,357.2 898.9,355.6 890.9,353.4 876.5,348.9 859.8,342.9 811.4,324.0 771.5,307.8 758.6,303.0 747.5,299.2 733.1,295.0 713.7,290.3 694.6,286.5 674.1,283.2 654.0,280.7 629.6,278.6 592.8,276.3 558.2,274.9 456.9,273.3 331.0,273.4ZM331.0,361.9 422.5,361.9 501.1,362.8 531.2,363.5 568.9,365.2 594.2,366.9 617.6,369.3 640.3,372.5 658.3,375.7 673.1,378.8 689.1,383.0 707.9,388.5 754.1,403.1 809.8,422.3 857.3,437.2 893.9,450.1 907.7,454.5 918.5,457.2 928.6,459.2 938.1,460.3 947.4,460.7 956.8,460.3 966.3,459.2 976.4,457.2 987.2,454.4 1000.0,450.4 1037.6,437.1 1085.2,422.2 1141.0,403.0 1187.2,388.4 1206.1,382.9 1222.0,378.8 1236.7,375.6 1254.7,372.4 1277.4,369.3 1290.2,367.9 1302.5,366.7 1327.7,365.1 1365.4,363.5 1393.9,362.8 1472.5,361.9 1567.0,361.9 1567.0,367.0 1473.9,367.0 1395.3,367.8 1363.6,368.7 1324.1,370.5 1300.3,372.1 1274.8,374.8 1251.7,378.2 1233.3,381.6 1220.1,384.5 1203.8,388.8 1182.4,395.1 1142.8,407.4 1089.8,425.2 1041.2,440.2 1029.0,444.4 1001.8,454.1 988.9,458.3 977.4,461.3 966.7,463.4 957.3,464.6 948.1,465.0 939.0,464.7 929.0,463.5 918.3,461.5 906.8,458.5 893.1,454.2 866.0,444.5 852.5,439.9 805.2,425.3 752.3,407.5 710.3,394.5 688.9,388.3 672.7,384.0 657.6,380.8 639.4,377.6 616.5,374.4 601.8,372.8 591.2,371.8 567.6,370.3 529.8,368.6 499.7,367.8 421.1,367.0 331.0,367.0ZM331.0,455.4 394.0,455.4 468.2,455.9 514.7,456.6 548.4,457.5 569.9,458.5 597.2,460.3 620.5,462.3 636.8,464.2 657.6,467.0 719.8,476.9 765.5,485.0 804.2,491.6 818.7,494.2 836.0,497.8 892.0,510.2 914.6,514.7 924.8,516.4 933.4,517.6 940.8,518.2 947.4,518.4 954.1,518.2 961.5,517.6 970.1,516.4 980.3,514.7 1002.9,510.1 1059.0,497.8 1076.4,494.2 1172.9,477.3 1210.6,471.1 1237.6,467.0 1258.3,464.1 1274.6,462.3 1297.9,460.2 1325.1,458.5 1346.6,457.5 1380.3,456.6 1426.9,455.9 1501.0,455.4 1567.0,455.4 1567.0,460.6 1501.0,460.5 1425.3,461.0 1375.2,461.8 1342.9,462.7 1319.1,463.8 1291.2,465.7 1267.0,467.9 1239.0,471.4 1191.3,478.5 1093.1,494.5 1067.3,499.2 1005.0,512.2 981.9,516.7 971.0,518.5 962.4,519.7 955.0,520.3 947.9,520.6 941.4,520.4 934.1,519.9 925.7,518.8 915.7,517.2 890.8,512.4 835.6,500.8 818.1,497.4 803.5,494.9 764.6,488.6 721.2,481.3 658.9,471.9 637.9,469.1 621.3,467.3 597.7,465.2 570.3,463.5 548.6,462.6 516.5,461.7 468.2,461.0 392.5,460.5 331.0,460.6ZM331.0,549.0 616.8,549.2 947.4,550.2 1278.4,549.2 1567.0,549.0 1567.0,554.2 1384.0,554.1 1278.4,553.9 1094.6,552.7 947.4,551.6 800.4,552.7 616.8,553.9 512.7,554.1 331.0,554.2ZM331.0,642.7 394.0,642.7 468.2,642.2 516.5,641.5 548.6,640.6 570.1,639.7 597.5,637.9 621.0,635.9 637.4,634.1 658.4,631.2 720.6,621.6 817.7,605.1 835.1,601.6 891.5,589.6 915.5,584.9 925.6,583.3 933.5,582.2 940.9,581.6 947.4,581.4 954.0,581.6 961.4,582.2 969.3,583.3 979.4,584.9 1003.4,589.6 1059.9,601.7 1077.3,605.2 1172.0,621.3 1191.8,624.5 1236.8,631.3 1257.7,634.1 1274.1,635.9 1297.6,637.9 1324.9,639.7 1346.5,640.6 1380.2,641.5 1426.8,642.2 1501.0,642.7 1567.0,642.7 1567.0,647.8 1498.0,647.7 1412.8,647.2 1387.0,646.8 1358.6,646.0 1338.0,645.3 1321.5,644.5 1300.1,643.1 1281.4,641.5 1261.2,639.3 1243.4,636.9 1219.2,633.2 1178.4,626.5 1076.8,608.4 1059.5,604.7 1002.3,591.9 980.4,587.4 970.2,585.7 961.6,584.5 954.1,583.8 946.9,583.6 940.2,583.9 932.7,584.6 924.1,585.8 913.8,587.6 891.7,592.0 835.6,604.7 818.2,608.3 721.7,625.6 659.7,635.7 638.9,638.7 622.4,640.6 599.0,642.7 571.6,644.6 550.1,645.6 516.3,646.6 469.7,647.3 394.0,647.8 331.0,647.8ZM331.0,736.2 422.6,736.2 501.2,735.3 531.3,734.6 569.1,732.8 592.8,731.3 603.4,730.3 618.1,728.6 641.0,725.4 657.1,722.6 672.0,719.4 688.0,715.3 709.3,709.1 751.3,696.0 807.7,676.9 854.5,662.3 866.6,658.2 893.6,648.5 907.4,644.2 918.9,641.3 928.8,639.4 938.2,638.2 947.4,637.8 956.6,638.2 966.1,639.4 976.0,641.3 987.5,644.2 1001.3,648.6 1028.4,658.3 1040.5,662.4 1087.3,676.9 1143.8,696.1 1185.8,709.2 1207.1,715.4 1223.1,719.5 1238.0,722.6 1254.1,725.5 1277.0,728.7 1291.6,730.3 1302.3,731.3 1325.9,732.8 1363.7,734.6 1393.8,735.3 1472.4,736.2 1567.0,736.2 1567.0,741.3 1477.1,741.4 1390.8,740.4 1350.9,739.2 1309.5,737.0 1297.5,736.1 1285.0,734.8 1270.3,733.1 1257.1,731.2 1239.3,728.2 1222.7,724.7 1206.9,720.7 1188.2,715.2 1141.9,700.5 1089.1,682.1 1073.8,677.1 1037.0,665.6 999.5,652.4 986.7,648.3 976.6,645.8 965.7,643.7 956.1,642.6 946.7,642.2 938.0,642.6 928.4,643.8 918.3,645.7 908.3,648.3 895.4,652.4 858.0,665.5 805.9,682.0 753.1,700.4 709.2,714.4 690.5,719.9 674.6,724.1 659.8,727.3 641.9,730.5 619.1,733.7 606.4,735.2 594.0,736.3 568.8,738.0 531.1,739.7 502.7,740.4 424.1,741.3 331.0,741.3ZM331.0,829.9 456.9,829.9 558.1,828.3 592.7,827.0 629.5,824.7 653.8,822.7 673.8,820.2 694.2,817.0 713.2,813.4 732.5,808.8 741.4,806.4 748.6,804.2 759.5,800.5 772.3,795.8 815.3,778.4 860.5,761.0 877.2,755.0 891.6,750.4 899.7,748.3 906.4,746.7 912.9,745.4 920.4,744.2 926.8,743.4 934.1,742.7 947.5,742.2 960.9,742.7 968.2,743.4 974.5,744.2 982.0,745.4 988.6,746.7 995.3,748.3 1003.3,750.5 1017.7,755.0 1034.5,761.0 1079.7,778.5 1122.7,795.9 1135.5,800.6 1146.5,804.3 1153.7,806.5 1162.5,808.9 1181.8,813.4 1200.8,817.1 1221.3,820.2 1241.3,822.7 1265.5,824.7 1302.3,827.0 1336.9,828.4 1438.1,829.9 1567.0,829.9 1567.0,834.9 1427.5,834.9 1381.1,834.1 1340.1,833.6 1310.5,832.6 1286.7,831.4 1256.3,829.4 1238.5,827.8 1223.7,826.2 1201.8,823.0 1181.3,819.2 1160.6,814.6 1150.1,811.8 1143.0,809.8 1132.2,806.2 1119.6,801.6 1073.9,783.3 1036.2,769.1 1016.7,762.2 1000.9,757.4 992.8,755.2 986.0,753.7 972.9,751.4 960.1,750.0 953.8,749.7 946.4,749.6 939.1,749.7 932.7,750.2 919.9,751.7 906.7,754.2 892.9,757.6 877.0,762.5 857.4,769.5 821.1,783.2 777.2,800.9 764.6,805.5 753.8,809.1 746.7,811.3 736.2,814.1 717.1,818.5 698.3,822.1 676.3,825.5 656.5,827.8 630.7,829.9 595.6,832.1 561.1,833.4 459.9,835.0 331.0,834.9ZM331.0,923.5 524.4,923.5 588.7,922.2 634.0,921.7 659.9,921.0 704.5,918.9 745.9,916.3 768.8,914.7 797.7,912.2 866.2,905.2 896.5,902.7 922.1,901.3 934.8,900.9 947.5,900.8 960.2,901.0 972.9,901.3 998.5,902.7 1028.8,905.3 1097.3,912.2 1126.2,914.7 1149.1,916.3 1190.5,918.9 1235.1,921.0 1261.0,921.7 1306.3,922.2 1370.6,923.5 1567.0,923.5 1567.0,928.5 1370.6,928.6 1347.8,928.4 1301.9,927.3 1247.5,926.6 1221.5,925.8 1195.4,924.6 1128.1,920.6 1093.3,917.9 1027.8,911.9 997.4,909.7 970.2,908.4 944.7,908.1 920.5,908.6 894.7,909.9 865.7,912.0 803.2,917.7 771.5,920.2 705.8,924.3 659.7,926.3 638.4,926.8 593.1,927.3 547.2,928.4 527.4,928.6 331.0,928.5ZM331.0,1017.1 624.9,1017.1 652.1,1016.9 726.2,1015.5 802.7,1014.9 895.4,1013.7 947.5,1013.5 999.6,1013.7 1092.3,1014.9 1168.8,1015.5 1242.9,1016.9 1268.6,1017.1 1567.0,1017.1 1567.0,1022.1 1264.1,1022.3 1235.4,1022.0 1156.8,1020.6 1080.4,1020.0 996.7,1019.2 947.5,1019.0 898.3,1019.2 814.6,1020.0 738.2,1020.6 659.6,1022.0 630.9,1022.3 331.0,1022.1Z" fill="#000"/><circle cx="947.5" cy="547.3" r="349.2" fill="none" stroke="#d0d0d0" stroke-width="1.1" style="mix-blend-mode:difference"/></svg>
<div class="a" style="left:340px;top:54px;width:1238px;height:11px;background:#474747;border:1px solid #3a3a3a;border-bottom:none;border-radius:5px 5px 0 0"></div>
<div class="a" style="left:649.5px;top:44px;width:309px;height:21px;background:#1b1b1b;border:1px solid #767676;border-bottom:none;border-radius:4px 4px 4px 4px"></div>
<div class="txt" style="left:649.5px;top:46.5px;width:309px;text-align:center;font-size:13.3px;color:#f0f0f0">S__80773160.jpg &lt; Display P3 &gt;</div>
<div class="a" style="left:958.5px;top:44px;width:310px;height:21px;background:#7aaad9;border-radius:4px 4px 0 0"></div>
<div class="txt" style="left:958.5px;top:46.5px;width:310px;text-align:center;font-size:13.3px;color:#fafafa">1500.png</div>

<!-- ===== RIGHT PANELS ===== -->
<div class="a" style="left:1578px;top:44px;width:2px;height:1015px;background:#2c2c2c"></div>
<!-- Navigator -->
<div class="hd" style="left:1580px;top:44px;width:332px;height:22.5px"><div class="t" style="left:34px;top:5px">Navigator</div>
<svg style="left:0;top:0" width="40" height="21" viewBox="1580 45 40 21"><circle cx="1588.6" cy="54" r="7" fill="#383838"/><circle cx="1606.5" cy="54" r="7" fill="#383838"/><path d="M1585.8 51.2l5.6 5.6M1591.4 51.2l-5.6 5.6" stroke="#f4f4f4" stroke-width="2.1"/><g fill="none" stroke="#e8e8e8" stroke-width="1.4"><rect x="1602.7" y="53.3" width="5.8" height="4.4" rx="1"/><path d="M1604.7 53.3v-2.1h5.4v4.4h-1.6"/></g></svg></div>
<div class="a" style="left:1580px;top:66.5px;width:332px;height:30px;border-top:1px solid #555;border-left:1px solid #555"></div>
<svg class="a" style="left:1580px;top:66px" width="332" height="32" viewBox="1580 66 332 32">
<g fill="none" stroke="#d8d8d8" stroke-width="1.7">
<circle cx="1594" cy="80.8" r="5"/><path d="M1597.6 84.4 L1601.5 88.3" stroke-width="2.4"/><path d="M1591.6 80.8h4.8M1594 78.4v4.8" stroke-width="1.3"/>
<circle cx="1624.2" cy="80.8" r="5"/><path d="M1627.8 84.4 L1631.7 88.3" stroke-width="2.4"/><path d="M1621.8 80.8h4.8" stroke-width="1.3"/>
<circle cx="1654.5" cy="81.5" r="4.6"/><path d="M1657.8 84.8 L1660.5 87.5" stroke-width="2.2"/><path d="M1648.4 78v-3h3M1662.2 78v-3h-3M1648.4 85v3h3" stroke-width="1.3"/>
</g>
<path d="M1673.5 68v28M1768 68v28" stroke="#262626" stroke-width="1" stroke-dasharray="1.2 2"/>
<path d="M1686 84 A6 6 0 1 1 1697 81" fill="none" stroke="#d8d8d8" stroke-width="2.4"/><path d="M1683 82 L1686 89 L1690 83.5Z" fill="#d8d8d8"/>
<g stroke="#8a8a8a" stroke-width="1.4"><path d="M1721 75v2.5M1721 84.5v2.5M1715 81h2.5M1724.5 81h2.5M1716.8 76.8l1.6 1.6M1723.6 83.6l1.6 1.6M1716.8 85.2l1.6-1.6M1723.6 78.4l1.6-1.6"/></g>
<path d="M1757 84 A6 6 0 1 0 1746 81" fill="none" stroke="#d8d8d8" stroke-width="2.4"/><path d="M1760 82 L1757 89 L1753 83.5Z" fill="#d8d8d8"/>
<g fill="none" stroke="#d8d8d8" stroke-width="1.2"><path d="M1781.5 78 L1786 82.5 L1781.5 87Z"/></g><path d="M1794 78 L1789.5 82.5 L1794 87Z" fill="#d8d8d8"/><path d="M1787.7 75v14" stroke="#d8d8d8" stroke-width="0.8" stroke-dasharray="1.5 1"/><path d="M1783 76 Q1788 72 1792.5 76" fill="none" stroke="#d8d8d8" stroke-width="1.2"/>
</svg>
<svg class="a" style="left:1662.2px;top:98.2px" width="167.5" height="167.5" viewBox="1662.2 98.2 167.5 167.5"><rect x="1662.2" y="98.2" width="167.5" height="167.5" fill="#fff"/><path d="M1662.17,98.20 1662.17,265.70 1663.17,265.70 1663.17,98.20ZM1672.58,98.20 1672.58,265.70 1673.58,265.70 1673.58,98.20ZM1682.99,98.20 1682.99,265.70 1683.99,265.70 1683.99,98.20ZM1693.40,98.20 1693.39,146.19 1693.76,181.70 1693.38,217.71 1693.40,265.70 1694.40,265.70 1694.39,218.71 1694.84,181.70 1694.39,145.19 1694.40,98.20ZM1703.81,98.20 1703.80,134.19 1704.04,148.88 1704.74,162.14 1705.92,176.01 1706.12,181.71 1705.93,187.40 1704.72,201.76 1704.03,215.02 1703.80,229.21 1703.81,265.70 1704.81,265.70 1704.80,229.71 1705.17,212.43 1705.86,201.68 1707.31,187.81 1707.57,182.18 1707.28,175.60 1705.71,160.19 1705.05,148.40 1704.80,133.69 1704.81,98.20ZM1714.22,98.20 1714.21,126.68 1714.37,137.91 1714.59,143.66 1715.08,150.09 1715.85,155.15 1716.78,159.20 1717.77,162.19 1720.23,168.37 1722.55,174.75 1723.42,178.20 1723.76,181.74 1723.57,184.55 1722.96,187.52 1721.59,191.69 1717.05,203.56 1715.91,208.21 1715.11,213.28 1714.61,219.73 1714.36,226.00 1714.21,236.71 1714.22,265.70 1715.22,265.70 1715.21,237.21 1715.36,226.49 1715.65,219.66 1716.22,213.14 1716.99,208.55 1718.07,204.38 1723.15,191.36 1724.25,188.08 1724.89,185.16 1725.15,182.08 1724.97,179.02 1724.30,175.77 1723.23,172.51 1719.06,162.05 1717.96,158.96 1716.93,154.80 1716.11,149.67 1715.63,143.72 1715.37,137.41 1715.21,126.19 1715.22,98.20ZM1724.63,98.20 1724.62,122.19 1724.74,132.96 1725.08,141.09 1725.54,145.82 1726.17,149.72 1727.05,153.38 1729.14,160.10 1734.86,177.12 1735.45,179.57 1735.64,181.77 1735.47,183.96 1734.91,186.39 1729.04,203.89 1726.95,210.65 1726.24,213.58 1725.59,217.51 1725.07,222.83 1724.74,230.95 1724.62,241.72 1724.63,265.70 1725.63,265.70 1725.62,241.71 1725.74,230.92 1726.08,222.76 1726.63,217.34 1727.34,213.29 1728.11,210.21 1733.62,192.61 1735.63,186.80 1736.28,184.13 1736.49,182.00 1736.34,179.90 1735.83,177.57 1733.55,170.83 1728.45,154.63 1727.41,150.72 1726.59,145.99 1726.06,140.60 1725.74,132.46 1725.63,98.20ZM1735.04,98.20 1735.10,130.00 1735.31,138.31 1735.62,143.40 1736.10,147.91 1737.32,155.74 1739.41,167.53 1741.71,178.19 1742.02,180.22 1742.12,181.79 1742.04,183.35 1741.69,185.59 1739.36,196.38 1737.40,207.48 1736.16,215.29 1735.65,219.89 1735.29,225.63 1735.10,233.39 1735.04,265.70 1736.04,265.70 1736.11,232.84 1736.30,224.99 1736.68,219.06 1737.12,215.06 1738.26,207.21 1740.04,196.18 1742.19,185.28 1742.55,181.96 1742.20,178.49 1739.99,167.20 1738.19,156.01 1737.06,148.14 1736.59,143.51 1736.27,137.76 1736.10,130.01 1736.04,98.20ZM1745.45,98.20 1745.47,143.37 1745.68,181.80 1745.47,220.64 1745.45,265.70 1746.45,265.70 1746.41,220.64 1745.96,181.80 1746.41,143.37 1746.45,98.20ZM1755.86,98.20 1755.80,130.00 1755.63,137.75 1755.30,143.47 1754.83,148.06 1753.66,155.92 1751.79,167.13 1749.53,178.24 1749.13,181.79 1749.51,185.31 1751.74,196.25 1753.59,207.31 1754.76,215.14 1755.26,219.82 1755.61,225.60 1755.80,233.38 1755.86,265.70 1756.86,265.70 1756.80,233.92 1756.62,226.23 1756.35,221.29 1755.84,216.22 1754.60,208.41 1752.42,196.46 1750.02,185.62 1749.66,183.37 1749.57,181.79 1749.67,180.20 1750.00,178.16 1752.38,167.46 1754.54,155.64 1755.67,148.68 1756.27,143.36 1756.59,138.29 1756.80,129.99 1756.86,98.20ZM1766.27,98.20 1766.17,132.46 1765.84,140.58 1765.33,145.93 1764.68,149.89 1763.96,152.87 1761.90,159.69 1758.05,171.57 1756.18,176.94 1755.54,179.63 1755.35,181.77 1755.52,183.91 1756.14,186.57 1761.78,203.60 1763.85,210.37 1764.74,214.10 1765.37,218.03 1765.82,222.79 1766.16,230.93 1766.28,241.71 1766.27,265.70 1767.27,265.70 1767.28,241.21 1767.16,230.95 1766.87,223.41 1766.49,218.80 1765.82,214.36 1765.01,210.80 1762.91,204.05 1756.97,186.45 1756.39,183.99 1756.21,181.77 1756.41,179.54 1757.02,177.05 1762.81,159.93 1764.92,153.22 1765.63,150.30 1766.30,146.38 1766.82,141.07 1767.16,132.96 1767.28,122.18 1767.27,98.20ZM1776.68,98.20 1776.69,126.69 1776.54,137.41 1776.28,143.70 1775.76,150.17 1774.93,155.30 1773.89,159.43 1772.79,162.48 1768.87,172.39 1767.77,175.69 1767.12,178.63 1766.88,181.74 1767.09,184.85 1767.71,187.77 1768.95,191.48 1772.90,201.46 1773.97,204.52 1774.98,208.64 1775.79,213.75 1776.30,220.22 1776.54,226.50 1776.69,237.21 1776.68,265.70 1777.68,265.70 1777.69,236.71 1777.54,226.00 1777.34,220.28 1776.88,213.87 1776.17,208.86 1775.15,204.27 1774.20,201.32 1771.58,194.67 1769.50,188.80 1768.58,184.96 1768.33,181.74 1768.61,178.52 1769.44,175.06 1771.68,168.73 1774.10,162.63 1775.08,159.67 1776.02,155.64 1776.79,150.60 1777.29,144.16 1777.54,137.90 1777.69,127.19 1777.68,98.20ZM1787.09,98.20 1787.10,133.69 1786.86,148.39 1786.23,160.16 1784.81,175.09 1784.51,181.71 1784.79,188.32 1786.21,203.23 1786.87,215.52 1787.10,229.71 1787.09,265.70 1788.09,265.70 1788.09,227.20 1787.69,209.93 1787.12,200.27 1786.13,187.90 1785.93,181.23 1786.18,175.02 1787.34,160.10 1787.88,148.87 1788.10,134.69 1788.09,98.20ZM1797.50,98.20 1797.51,145.69 1797.09,181.70 1797.51,218.21 1797.50,265.70 1798.50,265.70 1798.52,217.21 1798.17,181.70 1798.52,146.69 1798.50,98.20ZM1807.91,98.20 1807.91,265.70 1808.91,265.70 1808.91,98.20ZM1818.32,98.20 1818.32,265.70 1819.32,265.70 1819.32,98.20ZM1828.73,98.20 1828.73,265.70 1829.73,265.70 1829.73,98.20Z" fill="#6a6a6a"/><path d="M1662.20,98.17 1829.70,98.17 1829.70,99.17 1662.20,99.17ZM1662.20,108.58 1829.70,108.58 1829.70,109.58 1662.20,109.58ZM1662.20,118.99 1829.70,118.99 1829.70,119.99 1662.20,119.99ZM1662.20,129.40 1710.19,129.38 1745.70,129.75 1781.21,129.39 1829.70,129.40 1829.70,130.40 1782.21,130.39 1745.70,130.83 1709.19,130.39 1662.20,130.40ZM1662.20,139.81 1698.19,139.80 1712.88,140.04 1726.14,140.73 1740.00,141.90 1745.70,142.09 1751.40,141.90 1765.76,140.71 1779.03,140.02 1793.21,139.80 1829.70,139.81 1829.70,140.81 1793.71,140.80 1776.44,141.16 1765.69,141.84 1751.34,143.31 1746.17,143.53 1740.54,143.33 1725.20,141.79 1712.40,141.05 1697.69,140.80 1662.20,140.81ZM1662.20,150.22 1690.69,150.21 1701.91,150.37 1707.66,150.59 1714.09,151.08 1719.15,151.85 1723.19,152.78 1726.18,153.77 1732.34,156.22 1738.71,158.53 1742.17,159.40 1745.72,159.72 1748.54,159.53 1751.52,158.91 1755.26,157.69 1765.20,153.82 1767.59,153.00 1772.23,151.88 1777.30,151.10 1783.74,150.60 1790.00,150.36 1800.71,150.21 1829.70,150.22 1829.70,151.22 1801.21,151.21 1789.98,151.37 1783.67,151.64 1777.16,152.20 1772.58,152.96 1768.42,154.01 1765.34,155.12 1755.37,159.09 1752.08,160.21 1749.15,160.86 1746.06,161.13 1742.99,160.95 1739.74,160.29 1736.04,159.05 1726.03,155.06 1722.95,153.96 1718.80,152.93 1713.66,152.11 1707.19,151.60 1700.90,151.36 1690.19,151.21 1662.20,151.22ZM1662.20,160.63 1686.19,160.62 1696.97,160.74 1705.10,161.09 1709.83,161.55 1713.73,162.18 1717.39,163.07 1724.10,165.17 1741.08,170.88 1743.53,171.46 1745.73,171.65 1747.93,171.47 1750.37,170.90 1767.95,165.00 1774.72,162.91 1777.63,162.22 1781.54,161.57 1786.84,161.06 1794.95,160.74 1805.21,160.62 1829.70,160.63 1829.70,161.63 1805.71,161.62 1794.93,161.74 1786.78,162.07 1781.37,162.62 1777.34,163.31 1772.69,164.53 1756.62,169.61 1750.21,171.79 1747.85,172.33 1745.74,172.50 1743.62,172.32 1740.96,171.69 1734.80,169.57 1723.15,165.84 1717.04,164.01 1713.31,163.13 1709.36,162.51 1704.61,162.07 1696.46,161.74 1662.20,161.63ZM1662.20,171.04 1694.00,171.10 1701.73,171.29 1707.42,171.63 1711.95,172.12 1719.77,173.35 1731.52,175.45 1742.15,177.75 1744.17,178.07 1745.74,178.16 1747.31,178.07 1749.33,177.76 1760.40,175.37 1771.54,173.39 1779.36,172.15 1783.93,171.65 1789.65,171.29 1797.39,171.10 1829.70,171.04 1829.70,172.04 1796.31,172.11 1788.41,172.33 1782.36,172.74 1778.24,173.22 1770.45,174.38 1760.20,176.05 1749.25,178.22 1745.91,178.59 1742.45,178.25 1731.19,176.02 1720.04,174.21 1712.17,173.08 1707.54,172.60 1701.77,172.27 1694.01,172.10 1662.20,172.04ZM1662.20,181.45 1706.67,181.47 1745.75,181.73 1784.67,181.47 1829.70,181.45 1829.70,182.45 1784.67,182.41 1745.75,182.01 1706.67,182.41 1662.20,182.45ZM1662.20,191.86 1694.01,191.80 1701.76,191.62 1707.51,191.29 1712.12,190.81 1719.98,189.65 1731.15,187.80 1742.21,185.56 1745.74,185.18 1749.26,185.55 1760.24,187.78 1771.33,189.62 1779.18,190.78 1783.84,191.27 1789.61,191.62 1797.38,191.80 1829.70,191.86 1829.70,192.86 1797.92,192.80 1790.23,192.63 1785.31,192.36 1780.25,191.86 1772.43,190.63 1759.92,188.35 1749.34,186.02 1747.32,185.70 1745.74,185.61 1744.16,185.71 1742.13,186.03 1731.47,188.38 1719.71,190.52 1711.89,191.78 1707.40,192.26 1702.30,192.59 1694.00,192.80 1662.20,192.86ZM1662.20,202.27 1696.46,202.16 1704.59,201.84 1709.96,201.32 1713.94,200.65 1716.94,199.92 1723.75,197.86 1735.58,194.04 1740.92,192.18 1743.60,191.55 1745.74,191.36 1747.87,191.54 1750.53,192.16 1755.85,194.00 1767.59,197.80 1774.38,199.87 1778.10,200.75 1782.04,201.38 1786.79,201.83 1794.93,202.16 1805.71,202.28 1829.70,202.27 1829.70,203.27 1805.21,203.28 1794.95,203.16 1786.86,202.84 1782.19,202.42 1778.36,201.84 1774.81,201.03 1768.05,198.93 1750.41,192.99 1747.95,192.40 1745.73,192.22 1743.51,192.41 1741.04,193.01 1723.99,198.77 1717.29,200.87 1713.67,201.74 1709.79,202.36 1705.08,202.82 1696.96,203.16 1686.19,203.28 1662.20,203.27ZM1662.20,212.68 1690.18,212.69 1701.41,212.54 1707.17,212.31 1713.63,211.81 1718.75,211.01 1723.47,209.83 1735.96,204.98 1739.69,203.72 1742.62,203.09 1745.72,202.85 1748.82,203.07 1751.74,203.69 1755.45,204.93 1765.45,208.90 1768.51,209.97 1772.63,210.98 1777.75,211.79 1784.22,212.30 1790.50,212.54 1801.21,212.69 1829.70,212.68 1829.70,213.68 1800.71,213.69 1790.00,213.54 1784.28,213.34 1777.87,212.88 1772.85,212.17 1768.26,211.15 1765.30,210.20 1758.64,207.57 1752.36,205.35 1748.93,204.55 1745.72,204.29 1742.87,204.51 1739.86,205.15 1735.62,206.55 1724.29,210.86 1719.67,211.99 1714.61,212.78 1708.17,213.29 1701.90,213.53 1690.68,213.69 1662.20,213.68ZM1662.20,223.09 1697.69,223.10 1712.39,222.85 1724.17,222.22 1739.10,220.78 1745.70,220.48 1752.31,220.76 1767.23,222.21 1779.51,222.87 1793.71,223.10 1829.70,223.09 1829.70,224.09 1791.20,224.09 1773.93,223.69 1764.26,223.12 1751.90,222.11 1745.23,221.90 1739.99,222.09 1726.12,223.20 1712.87,223.87 1698.69,224.10 1662.20,224.09ZM1662.20,233.50 1709.19,233.51 1745.70,233.09 1782.21,233.51 1829.70,233.50 1829.70,234.50 1781.21,234.52 1745.70,234.16 1710.69,234.51 1662.20,234.50ZM1662.20,243.91 1829.70,243.91 1829.70,244.91 1662.20,244.91ZM1662.20,254.32 1829.70,254.32 1829.70,255.32 1662.20,255.32ZM1662.20,264.73 1829.70,264.73 1829.70,265.73 1662.20,265.73Z" fill="#6a6a6a"/><rect x="1677.2" y="127.4" width="135.5" height="107.3" fill="none" stroke="#f00" stroke-width="1.9"/></svg>
<!-- Layer -->
<div class="hd" style="left:1580px;top:266.5px;width:332px;height:22.5px"><div class="t" style="left:34px;top:5px">Layer</div>
<svg style="left:0;top:0" width="40" height="21" viewBox="1580 267.5 40 21"><circle cx="1588.6" cy="277.7" r="7" fill="#383838"/><circle cx="1606.5" cy="277.7" r="7" fill="#383838"/><path d="M1585.8 274.9l5.6 5.6M1591.4 274.9l-5.6 5.6" stroke="#f4f4f4" stroke-width="2.1"/><g fill="none" stroke="#e8e8e8" stroke-width="1.4"><rect x="1602.7" y="277" width="5.8" height="4.4" rx="1"/><path d="M1604.7 277v-2.1h5.4v4.4h-1.6"/></g></svg></div>
<div class="txt" style="left:1586px;top:296px;font-size:13.3px;color:#dedede">Opacity</div>
<div class="sl" style="left:1670px;top:296.5px;width:187px;height:14.5px"></div>
<div class="txt" style="left:1868px;top:296px;font-size:13.3px;color:#e6e6e6">100 %</div>
<div class="txt" style="left:1586px;top:326px;font-size:13.3px;color:#dedede">Blending</div>
<div class="dd" style="left:1669.5px;top:324.5px;width:235px;height:18px"><div class="st"></div></div>
<svg class="a" style="left:1886px;top:325px" width="18" height="18" viewBox="0 0 18 18"><path d="M5.2 7 L8 4.2 L10.8 7 M5.2 10.4 L8 13.2 L10.8 10.4" fill="none" stroke="#eee" stroke-width="1.5"/></svg>
<div class="txt" style="left:1679.5px;top:325.5px;font-size:13.3px;color:#fafafa">Normal</div>
<div class="a" style="left:1589px;top:361px;width:13px;height:13px;border-radius:3px;background:#2c2c2c"></div>
<div class="txt" style="left:1605.5px;top:360px;font-size:13.3px;color:#e8e8e8">Protect Alpha</div>
<div class="a" style="left:1695.5px;top:361px;width:13px;height:13px;border-radius:3px;background:#5c5c5c"></div>
<div class="txt" style="left:1713.5px;top:360px;font-size:13.3px;color:#8c8c8c">Clipping</div>
<div class="a" style="left:1803.5px;top:361px;width:13px;height:13px;border-radius:3px;background:#2c2c2c"></div>
<div class="txt" style="left:1820.5px;top:360px;font-size:13.3px;color:#e8e8e8">Lock</div>
<div class="a" style="left:1580px;top:420px;width:310px;height:241px;background:#484644"></div><div class="a" style="left:1582px;top:381.5px;width:308px;height:39px;background:#4e4e4e;border:1px solid #3a3a3a"></div>
<div class="a" style="left:1583px;top:382.5px;width:18.5px;height:37px;background:#5a5a5a"></div>
<div class="a" style="left:1587.5px;top:397.5px;width:8px;height:8px;border-radius:50%;background:#cfcfcf;border:1px solid #9a9a9a"></div>
<div class="a" style="left:1601.5px;top:382.5px;width:287.5px;height:37px;background:#7aa8d8"></div>
<div class="a" style="left:1611px;top:383.5px;width:35.5px;height:35px;background-color:#f4f4f4;background-image:linear-gradient(45deg,#cfcfcf 25%,transparent 25%,transparent 75%,#cfcfcf 75%),linear-gradient(45deg,#cfcfcf 25%,transparent 25%,transparent 75%,#cfcfcf 75%);background-size:6px 6px;background-position:0 0,3px 3px;border:1px solid #888"></div>
<div class="txt" style="left:1655.5px;top:393.5px;font-size:13.6px;font-weight:bold;color:#fff">Layer1</div>
<svg class="a" style="left:1868px;top:393px" width="18" height="18" viewBox="-9 -9 18 18"><g fill="#e6e6e6"><circle r="5"/><path d="M-1.4 -8.5h2.8v17h-2.8zM-8.5 -1.4h17v2.8h-17z"/><path d="M-1.4 -8.5h2.8v17h-2.8zM-8.5 -1.4h17v2.8h-17z" transform="rotate(45)"/></g><circle r="2" fill="#7aa8d8"/></svg>
<div class="a" style="left:1889.5px;top:381.5px;width:21px;height:279px;background:#353535"></div>
<div class="a" style="left:1583px;top:660.5px;width:329px;height:34.5px;border-top:1px solid #595959;border-left:1px solid #595959"></div>
<svg class="a" style="left:1580px;top:660px" width="332" height="36" viewBox="1580 660 332 36">
<g fill="none" stroke="#dcdcdc" stroke-width="1.5">
<path d="M1592.5 670.6 H1598.3 L1602.7 675 V684.6 H1592.5Z"/><path d="M1598.1 670.6 V675.3 H1602.7" stroke-width="1.2"/>
<path d="M1622 670.6 H1627.8 L1632.2 675 V684.6 H1622Z"/>
<path d="M1652 670.6 H1657.8 L1662.2 675 V684.6 H1652Z"/>
</g>
<text x="1627" y="682.6" font-size="9" font-family="Liberation Sans" font-weight="bold" fill="#dcdcdc" text-anchor="middle">8</text>
<text x="1657" y="682.6" font-size="9" font-family="Liberation Sans" font-weight="bold" fill="#dcdcdc" text-anchor="middle">1</text>
<path d="M1679 671.5 H1684.5 L1686 673.5 H1694.5 V683.5 H1679Z" fill="#d4d4d4"/>
<path d="M1705 663v30M1771 663v30" stroke="#262626" stroke-width="1" stroke-dasharray="1.2 2"/>
<g fill="none" stroke="#dcdcdc" stroke-width="1.5"><path d="M1716.5 669.6 H1722 L1725 672.6 V680.6 H1716.5Z"/><path d="M1726.6 673.6 H1728.6 V684.6 H1720.6 V682.6"/></g>
<g fill="#7c7c7c"><path d="M1751.5 668.5h3v6h3.5l-5 5-5-5h3.5z"/><rect x="1746.5" y="681" width="13" height="1.7"/><rect x="1746.5" y="684.4" width="13" height="1.7"/></g>
<g fill="none" stroke="#8a8a8a" stroke-width="1.6"><path d="M1781.5 671.3 H1797.5 M1783.5 671.5 V684.6 H1795.5 V671.5 M1786.5 671.3 V668.6 H1792.5 V671.3"/></g>
</svg>
<!-- Reference -->
<div class="hd" style="left:1580px;top:695px;width:332px;height:22.5px"><div class="t" style="left:34px;top:5px">Reference</div>
<svg style="left:0;top:0" width="40" height="21" viewBox="1580 696 40 21"><circle cx="1588.6" cy="706" r="7" fill="#383838"/><circle cx="1606.5" cy="706" r="7" fill="#383838"/><path d="M1585.8 703.2l5.6 5.6M1591.4 703.2l-5.6 5.6" stroke="#f4f4f4" stroke-width="2.1"/><g fill="none" stroke="#e8e8e8" stroke-width="1.4"><rect x="1602.7" y="705.3" width="5.8" height="4.4" rx="1"/><path d="M1604.7 705.3v-2.1h5.4v4.4h-1.6"/></g></svg></div>
<div class="a" style="left:1580px;top:717.5px;width:332px;height:31px;border-top:1px solid #555;border-left:1px solid #555"></div>
<svg class="a" style="left:1580px;top:717px" width="332" height="33" viewBox="1580 717 332 33">
<path d="M1590.5 726.6 H1596.3 L1600.7 731 V741.3 H1590.5Z" fill="none" stroke="#dcdcdc" stroke-width="1.5"/><path d="M1596.1 726.6 V731.3 H1600.7" fill="none" stroke="#dcdcdc" stroke-width="1.2"/>
<g fill="none" stroke="#8a8a8a" stroke-width="1.6"><path d="M1618 729 H1633 M1620 729.2 V741.3 H1631 V729.2 M1623 729 V726.5 H1628 V729"/></g>
<path d="M1643.4 719v29M1739 719v29M1775 719v29M1870 719v29" stroke="#262626" stroke-width="1" stroke-dasharray="1.2 2"/>
<g fill="none" stroke="#8a8a8a" stroke-width="1.6">
<circle cx="1660" cy="733" r="4.6"/><path d="M1663.3 736.3 L1666.8 739.8" stroke-width="2.2"/><path d="M1657.8 733h4.4M1660 730.8v4.4" stroke-width="1.2"/>
<circle cx="1689.5" cy="733" r="4.6"/><path d="M1692.8 736.3 L1696.3 739.8" stroke-width="2.2"/><path d="M1687.3 733h4.4" stroke-width="1.2"/>
<circle cx="1720.5" cy="733.5" r="4.3"/><path d="M1723.5 736.5 L1726 739" stroke-width="2"/><path d="M1714.8 730.5v-3h3M1727.5 730.5v-3h-3M1714.8 737v3h3" stroke-width="1.2"/>
</g>
<path d="M1761.5 726.5 Q1764 726 1763.5 728.5 L1762 730 L1759.5 727.5Z" fill="#8a8a8a"/><path d="M1760 729.5 L1751.5 738 L1750.5 741 L1753.5 740 L1762 731.5" fill="none" stroke="#8a8a8a" stroke-width="1.5"/>
<path d="M1788 737 A5.6 5.6 0 1 1 1798.5 734" fill="none" stroke="#8a8a8a" stroke-width="2.2"/><path d="M1785.2 735 L1788 741.5 L1791.6 736.5Z" fill="#8a8a8a"/>
<g stroke="#8a8a8a" stroke-width="1.3"><path d="M1822.8 727v2.4M1822.8 736.6v2.4M1817 733h2.4M1826.4 733h2.4M1818.7 728.9l1.5 1.5M1825.4 735.6l1.5 1.5M1818.7 737.1l1.5-1.5M1825.4 730.4l1.5-1.5"/></g>
<path d="M1857.5 737 A5.6 5.6 0 1 0 1847 734" fill="none" stroke="#8a8a8a" stroke-width="2.2"/><path d="M1860.3 735 L1857.5 741.5 L1853.9 736.5Z" fill="#8a8a8a"/>
<g fill="none" stroke="#8a8a8a" stroke-width="1.1"><path d="M1883.5 729 L1888 733.5 L1883.5 738Z"/></g><path d="M1896 729 L1891.5 733.5 L1896 738Z" fill="#8a8a8a"/><path d="M1885 727 Q1890 723 1894.5 727" fill="none" stroke="#8a8a8a" stroke-width="1.1"/>
</svg>
<div class="a" style="left:1580px;top:750px;width:332px;height:30.5px;background-color:#fafafa;background-image:linear-gradient(45deg,#ececec 25%,transparent 25%,transparent 75%,#ececec 75%),linear-gradient(45deg,#ececec 25%,transparent 25%,transparent 75%,#ececec 75%);background-size:10px 10px;background-position:0 0,5px 5px"></div>
<!-- Brush Size -->
<div class="hd" style="left:1580px;top:780.5px;width:332px;height:22.5px"><div class="t" style="left:34px;top:5px">Brush Size</div>
<svg style="left:0;top:0" width="40" height="21" viewBox="1580 781.5 40 21"><circle cx="1588.6" cy="791.5" r="7" fill="#383838"/><circle cx="1606.5" cy="791.5" r="7" fill="#383838"/><path d="M1585.8 788.7l5.6 5.6M1591.4 788.7l-5.6 5.6" stroke="#f4f4f4" stroke-width="2.1"/><g fill="none" stroke="#e8e8e8" stroke-width="1.4"><rect x="1602.7" y="790.8" width="5.8" height="4.4" rx="1"/><path d="M1604.7 790.8v-2.1h5.4v4.4h-1.6"/></g></svg></div>
<div class="a" style="left:1580px;top:803px;width:312px;height:256px;background:#484644"></div><div class="a" style="left:1892px;top:803px;width:20px;height:256px;background:#333"></div>
<div class="bs" style="left:1580.8px;top:804.2px"><div class="l">0.5</div></div><div class="bs" style="left:1620.6px;top:804.2px"><div class="l">0.7</div></div><div class="bs" style="left:1660.5px;top:804.2px"><div class="c" style="width:1.2px;height:1.2px;opacity:0.35"></div><div class="l">1</div></div><div class="bs" style="left:1700.3px;top:804.2px"><div class="c" style="width:1.6px;height:1.6px;opacity:0.35"></div><div class="l">1.5</div></div><div class="bs" style="left:1740.2px;top:804.2px"><div class="c" style="width:2.4px;height:2.4px;opacity:1"></div><div class="l">2</div></div><div class="bs" style="left:1780.0px;top:804.2px"><div class="c" style="width:3.4px;height:3.4px;opacity:1"></div><div class="l">3</div></div><div class="bs" style="left:1819.9px;top:804.2px"><div class="c" style="width:4.6px;height:4.6px;opacity:1"></div><div class="l">4</div></div><div class="bs" style="left:1580.8px;top:854.1px"><div class="c" style="width:5.0px;height:5.0px;opacity:1"></div><div class="l">5</div></div><div class="bs" style="left:1620.6px;top:854.1px"><div class="c" style="width:7.0px;height:7.0px;opacity:1"></div><div class="l">7</div></div><div class="bs" style="left:1660.5px;top:854.1px"><div class="c" style="width:10.0px;height:10.0px;opacity:1"></div><div class="l">10</div></div><div class="bs" style="left:1700.3px;top:854.1px"><div class="c" style="width:11.5px;height:11.5px;opacity:1"></div><div class="l">12</div></div><div class="bs" style="left:1740.2px;top:854.1px"><div class="c" style="width:15.0px;height:15.0px;opacity:1"></div><div class="l">15</div></div><div class="bs" style="left:1780.0px;top:854.1px"><div class="c" style="width:20.0px;height:20.0px;opacity:1"></div><div class="l">20</div></div><div class="bs" style="left:1819.9px;top:854.1px"><div class="c" style="width:24.0px;height:24.0px;opacity:1"></div><div class="l">25</div></div><div class="bs" style="left:1580.8px;top:904.0px"><div class="c" style="width:24.0px;height:24.0px;opacity:1"></div><div class="l">30</div></div><div class="bs" style="left:1620.6px;top:904.0px"><div class="c" style="width:24.0px;height:24.0px;opacity:1"></div><div class="l">40</div></div><div class="bs" style="left:1660.5px;top:904.0px"><div class="c" style="width:24.0px;height:24.0px;opacity:1"></div><div class="l">50</div></div><div class="bs" style="left:1700.3px;top:904.0px"><div class="c" style="width:24.0px;height:24.0px;opacity:1"></div><div class="l">70</div></div><div class="bs" style="left:1740.2px;top:904.0px"><div class="c" style="width:24.0px;height:24.0px;opacity:1"></div><div class="l">100</div></div><div class="bs" style="left:1780.0px;top:904.0px"><div class="c" style="width:24.0px;height:24.0px;opacity:1"></div><div class="l">150</div></div><div class="bs" style="left:1819.9px;top:904.0px"><div class="c" style="width:24.0px;height:24.0px;opacity:1"></div><div class="l">200</div></div><div class="bs" style="left:1580.8px;top:953.9px"><div class="c" style="width:24.0px;height:24.0px;opacity:1"></div><div class="l">300</div></div><div class="bs" style="left:1620.6px;top:953.9px"><div class="c" style="width:24.0px;height:24.0px;opacity:1"></div><div class="l">400</div></div><div class="bs" style="left:1660.5px;top:953.9px"><div class="c" style="width:24.0px;height:24.0px;opacity:1"></div><div class="l">500</div></div><div class="bs" style="left:1700.3px;top:953.9px"><div class="c" style="width:24.0px;height:24.0px;opacity:1"></div><div class="l">700</div></div><div class="bs" style="left:1740.2px;top:953.9px"><div class="c" style="width:24.0px;height:24.0px;opacity:1"></div><div class="l">1000</div></div><div class="bs" style="left:1780.0px;top:953.9px"><div class="c" style="width:24.0px;height:24.0px;opacity:1"></div><div class="l">1500</div></div><div class="bs" style="left:1819.9px;top:953.9px"><div class="c" style="width:24.0px;height:24.0px;opacity:1"></div><div class="l">2000</div></div>

<!-- ===== STATUS ===== -->
<div class="txt" style="left:6.5px;top:1061px;font-size:13.4px;color:#dcdcdc">[command] [shift]</div>
<div class="txt" style="left:123px;top:1061px;font-size:13.4px;color:#dcdcdc">1506 * 1506 pixel</div>
<div class="txt" style="left:239.5px;top:1061px;font-size:13.4px;color:#dcdcdc">(53.1 * 53.1cm)</div>
<div class="txt" style="left:341px;top:1061px;font-size:13.4px;color:#dcdcdc">72 dpi</div>
<div class="txt" style="left:389.5px;top:1061px;font-size:13.4px;color:#dcdcdc">100 %</div>
<div class="txt" style="left:438px;top:1061px;font-size:13.4px;color:#dcdcdc">( 751, 748 )</div>

</body></html>
